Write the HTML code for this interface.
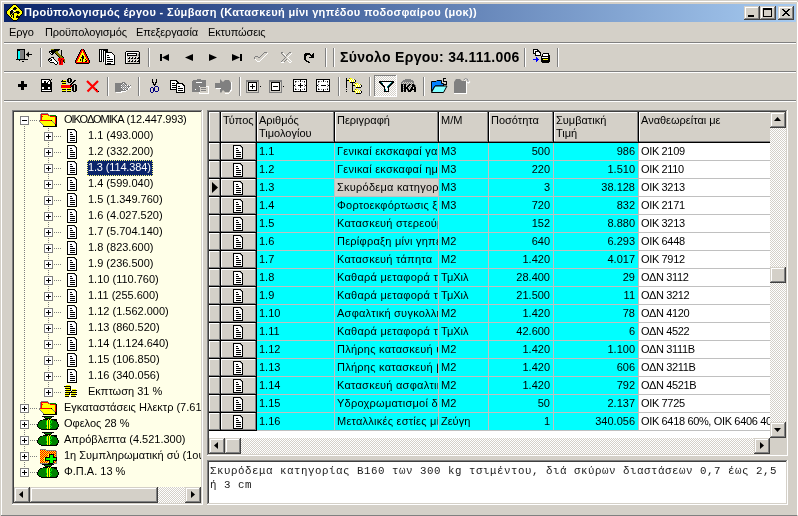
<!DOCTYPE html><html><head><meta charset="utf-8"><style>
*{margin:0;padding:0;box-sizing:border-box}
html,body{width:798px;height:516px;overflow:hidden}
body{position:relative;background:#D4D0C8;font-family:"Liberation Sans",sans-serif;font-size:11px;color:#000}
.a{position:absolute}
.t{white-space:pre;line-height:13px;will-change:transform}
.raised{box-shadow:inset -1px -1px #404040,inset 1px 1px #D4D0C8,inset -2px -2px #808080,inset 2px 2px #fff}
.sunken{box-shadow:inset -1px -1px #fff,inset 1px 1px #808080,inset -2px -2px #D4D0C8,inset 2px 2px #404040}
.thin{box-shadow:inset -1px -1px #808080,inset 1px 1px #fff}
.thinl{box-shadow:inset 0 -1px #808080,inset 1px 1px #fff}
.dither{background:repeating-conic-gradient(#fff 0 25%,#D4D0C8 0 50%) 0 0/2px 2px}
.cell{overflow:hidden;white-space:pre;line-height:13px;padding:2px 0 0 2px;will-change:transform}
.r{text-align:right;padding:2px 3px 0 0}
</style></head><body><div class="a " style="left:1px;top:1px;width:796px;height:1px;background:#fff"></div>
<div class="a " style="left:1px;top:1px;width:1px;height:514px;background:#fff"></div>
<div class="a " style="left:1px;top:515px;width:796px;height:1px;background:#808080"></div>
<div class="a " style="left:797px;top:2px;width:1px;height:513px;background:#fff"></div>
<div class="a " style="left:4px;top:4px;width:792px;height:18px;background:linear-gradient(to right,#0A246A,#A6CAF0)"></div>
<svg class="a" style="left:6px;top:4px;" width="17" height="17" viewBox="0 0 17 17" shape-rendering="crispEdges"><rect x="7" y="0" width="3" height="1" fill="#000000"/><rect x="6" y="1" width="1" height="1" fill="#000000"/><rect x="7" y="1" width="3" height="1" fill="#FFFF00"/><rect x="10" y="1" width="1" height="1" fill="#000000"/><rect x="5" y="2" width="1" height="1" fill="#000000"/><rect x="6" y="2" width="5" height="1" fill="#FFFF00"/><rect x="11" y="2" width="1" height="1" fill="#000000"/><rect x="4" y="3" width="1" height="1" fill="#000000"/><rect x="5" y="3" width="3" height="1" fill="#FFFF00"/><rect x="8" y="3" width="2" height="1" fill="#000000"/><rect x="10" y="3" width="2" height="1" fill="#FFFF00"/><rect x="12" y="3" width="1" height="1" fill="#000000"/><rect x="3" y="4" width="1" height="1" fill="#000000"/><rect x="4" y="4" width="3" height="1" fill="#FFFF00"/><rect x="7" y="4" width="4" height="1" fill="#000000"/><rect x="11" y="4" width="2" height="1" fill="#FFFF00"/><rect x="13" y="4" width="1" height="1" fill="#000000"/><rect x="2" y="5" width="1" height="1" fill="#000000"/><rect x="3" y="5" width="2" height="1" fill="#FFFF00"/><rect x="5" y="5" width="1" height="1" fill="#FFFFFF"/><rect x="6" y="5" width="1" height="1" fill="#FFFF00"/><rect x="7" y="5" width="3" height="1" fill="#000000"/><rect x="10" y="5" width="4" height="1" fill="#FFFF00"/><rect x="14" y="5" width="1" height="1" fill="#000000"/><rect x="1" y="6" width="1" height="1" fill="#000000"/><rect x="2" y="6" width="2" height="1" fill="#FFFF00"/><rect x="4" y="6" width="1" height="1" fill="#FFFFFF"/><rect x="5" y="6" width="2" height="1" fill="#000000"/><rect x="7" y="6" width="1" height="1" fill="#FFFFFF"/><rect x="8" y="6" width="7" height="1" fill="#FFFF00"/><rect x="15" y="6" width="1" height="1" fill="#000000"/><rect x="0" y="7" width="1" height="1" fill="#000000"/><rect x="1" y="7" width="3" height="1" fill="#FFFF00"/><rect x="4" y="7" width="3" height="1" fill="#000000"/><rect x="7" y="7" width="1" height="1" fill="#808080"/><rect x="8" y="7" width="1" height="1" fill="#FFFFFF"/><rect x="9" y="7" width="1" height="1" fill="#FFFF00"/><rect x="10" y="7" width="3" height="1" fill="#000000"/><rect x="13" y="7" width="3" height="1" fill="#FFFF00"/><rect x="16" y="7" width="1" height="1" fill="#000000"/><rect x="0" y="8" width="1" height="1" fill="#000000"/><rect x="1" y="8" width="3" height="1" fill="#FFFF00"/><rect x="4" y="8" width="3" height="1" fill="#000000"/><rect x="7" y="8" width="1" height="1" fill="#FFFF00"/><rect x="8" y="8" width="6" height="1" fill="#000000"/><rect x="14" y="8" width="2" height="1" fill="#FFFF00"/><rect x="16" y="8" width="1" height="1" fill="#000000"/><rect x="0" y="9" width="1" height="1" fill="#000000"/><rect x="1" y="9" width="3" height="1" fill="#FFFF00"/><rect x="4" y="9" width="2" height="1" fill="#000000"/><rect x="6" y="9" width="1" height="1" fill="#808080"/><rect x="7" y="9" width="1" height="1" fill="#000000"/><rect x="8" y="9" width="3" height="1" fill="#FFFF00"/><rect x="11" y="9" width="2" height="1" fill="#000000"/><rect x="13" y="9" width="3" height="1" fill="#FFFF00"/><rect x="16" y="9" width="1" height="1" fill="#000000"/><rect x="1" y="10" width="1" height="1" fill="#000000"/><rect x="2" y="10" width="2" height="1" fill="#FFFF00"/><rect x="4" y="10" width="1" height="1" fill="#000000"/><rect x="5" y="10" width="1" height="1" fill="#FFFF00"/><rect x="6" y="10" width="2" height="1" fill="#000000"/><rect x="8" y="10" width="7" height="1" fill="#FFFF00"/><rect x="15" y="10" width="1" height="1" fill="#000000"/><rect x="2" y="11" width="1" height="1" fill="#000000"/><rect x="3" y="11" width="2" height="1" fill="#FFFF00"/><rect x="5" y="11" width="1" height="1" fill="#000000"/><rect x="6" y="11" width="1" height="1" fill="#FFFF00"/><rect x="7" y="11" width="1" height="1" fill="#000000"/><rect x="8" y="11" width="3" height="1" fill="#FFFF00"/><rect x="11" y="11" width="1" height="1" fill="#000000"/><rect x="12" y="11" width="2" height="1" fill="#FFFF00"/><rect x="14" y="11" width="1" height="1" fill="#000000"/><rect x="3" y="12" width="1" height="1" fill="#000000"/><rect x="4" y="12" width="1" height="1" fill="#FFFF00"/><rect x="5" y="12" width="1" height="1" fill="#000000"/><rect x="6" y="12" width="1" height="1" fill="#FFFF00"/><rect x="7" y="12" width="1" height="1" fill="#000000"/><rect x="8" y="12" width="2" height="1" fill="#FFFF00"/><rect x="10" y="12" width="4" height="1" fill="#000000"/><rect x="4" y="13" width="1" height="1" fill="#000000"/><rect x="5" y="13" width="2" height="1" fill="#FFFF00"/><rect x="7" y="13" width="1" height="1" fill="#000000"/><rect x="8" y="13" width="2" height="1" fill="#FFFF00"/><rect x="10" y="13" width="4" height="1" fill="#000000"/><rect x="5" y="14" width="1" height="1" fill="#000000"/><rect x="6" y="14" width="6" height="1" fill="#FFFF00"/><rect x="12" y="14" width="1" height="1" fill="#000000"/><rect x="6" y="15" width="1" height="1" fill="#000000"/><rect x="7" y="15" width="4" height="1" fill="#FFFF00"/><rect x="11" y="15" width="1" height="1" fill="#000000"/><rect x="7" y="16" width="4" height="1" fill="#000000"/></svg>
<div class="a t" style="left:24px;top:6px;color:#fff;font-weight:bold;letter-spacing:0.34px">Προϋπολογισμός έργου - Σύμβαση (Κατασκευή μίνι γηπέδου ποδοσφαίρου (μοκ))</div>
<div class="a raised" style="left:744px;top:6px;width:16px;height:14px;background:#D4D0C8"><svg class="a" style="left:4px;top:9px;" width="6" height="2" viewBox="0 0 6 2" shape-rendering="crispEdges"><rect x="0" y="0" width="6" height="2" fill="#000"/></svg></div>
<div class="a raised" style="left:760px;top:6px;width:16px;height:14px;background:#D4D0C8"><svg class="a" style="left:3px;top:2px;" width="9" height="9" viewBox="0 0 9 9" shape-rendering="crispEdges"><rect x="0.5" y="1" width="8" height="7.5" fill="none" stroke="#000" stroke-width="1"/><rect x="0" y="0" width="9" height="2" fill="#000"/></svg></div>
<div class="a raised" style="left:778px;top:6px;width:16px;height:14px;background:#D4D0C8"><svg class="a" style="left:4px;top:3px;" width="8" height="7" viewBox="0 0 8 7" shape-rendering="crispEdges"><path d="M0 0h2l2 2.5l2-2.5h2l-3 3.5l3 3.5h-2l-2-2.5l-2 2.5h-2l3-3.5z" fill="#000"/></svg></div>
<div class="a t" style="left:9px;top:26px;letter-spacing:-0.12px">Εργο</div>
<div class="a t" style="left:45px;top:26px;letter-spacing:-0.12px">Προϋπολογισμός</div>
<div class="a t" style="left:136px;top:26px;letter-spacing:-0.12px">Επεξεργασία</div>
<div class="a t" style="left:208px;top:26px;letter-spacing:-0.12px">Εκτυπώσεις</div>
<div class="a " style="left:4px;top:42px;width:792px;height:1px;background:#808080"></div>
<div class="a " style="left:4px;top:43px;width:792px;height:1px;background:#fff"></div>
<div class="a " style="left:4px;top:71px;width:792px;height:1px;background:#808080"></div>
<div class="a " style="left:4px;top:72px;width:792px;height:1px;background:#fff"></div>
<div class="a " style="left:4px;top:100px;width:792px;height:1px;background:#808080"></div>
<div class="a " style="left:4px;top:101px;width:792px;height:1px;background:#fff"></div>
<div class="a " style="left:40px;top:48px;width:1px;height:19px;background:#808080"></div>
<div class="a " style="left:41px;top:48px;width:1px;height:19px;background:#fff"></div>
<div class="a " style="left:148px;top:48px;width:1px;height:19px;background:#808080"></div>
<div class="a " style="left:149px;top:48px;width:1px;height:19px;background:#fff"></div>
<div class="a " style="left:325px;top:48px;width:1px;height:19px;background:#808080"></div>
<div class="a " style="left:326px;top:48px;width:1px;height:19px;background:#fff"></div>
<div class="a " style="left:333px;top:48px;width:1px;height:19px;background:#808080"></div>
<div class="a " style="left:334px;top:48px;width:1px;height:19px;background:#fff"></div>
<div class="a " style="left:524px;top:48px;width:1px;height:19px;background:#808080"></div>
<div class="a " style="left:525px;top:48px;width:1px;height:19px;background:#fff"></div>
<div class="a " style="left:557px;top:48px;width:1px;height:19px;background:#808080"></div>
<div class="a " style="left:558px;top:48px;width:1px;height:19px;background:#fff"></div>
<div class="a t" style="left:340px;top:49px;font-weight:bold;font-size:14px;line-height:16px;letter-spacing:0.3px">Σύνολο Εργου: 34.111.006</div>
<div class="a " style="left:107px;top:77px;width:1px;height:19px;background:#808080"></div>
<div class="a " style="left:108px;top:77px;width:1px;height:19px;background:#fff"></div>
<div class="a " style="left:138px;top:77px;width:1px;height:19px;background:#808080"></div>
<div class="a " style="left:139px;top:77px;width:1px;height:19px;background:#fff"></div>
<div class="a " style="left:239px;top:77px;width:1px;height:19px;background:#808080"></div>
<div class="a " style="left:240px;top:77px;width:1px;height:19px;background:#fff"></div>
<div class="a " style="left:338px;top:77px;width:1px;height:19px;background:#808080"></div>
<div class="a " style="left:339px;top:77px;width:1px;height:19px;background:#fff"></div>
<div class="a " style="left:369px;top:77px;width:1px;height:19px;background:#808080"></div>
<div class="a " style="left:370px;top:77px;width:1px;height:19px;background:#fff"></div>
<div class="a " style="left:423px;top:77px;width:1px;height:19px;background:#808080"></div>
<div class="a " style="left:424px;top:77px;width:1px;height:19px;background:#fff"></div>
<svg class="a" style="left:16px;top:49px;" width="17" height="16" viewBox="0 0 17 16" shape-rendering="crispEdges"><rect x="1" y="0" width="8" height="10" fill="#000"/><rect x="4" y="1" width="4" height="9" fill="#808080"/><rect x="2" y="2" width="2" height="9" fill="#00FFFF"/><rect x="3" y="11" width="1" height="1" fill="#000"/>
<rect x="0" y="10" width="12" height="1" fill="#000"/><rect x="10" y="5" width="6" height="1" fill="#000"/><path d="M10 5.5 L13 2.5 L13 8.5 Z" fill="#000" shape-rendering="geometricPrecision"/><rect x="6" y="12" width="2" height="1" fill="#000"/></svg>
<svg class="a" style="left:47px;top:47px;" width="18" height="18" viewBox="0 0 18 18" shape-rendering="crispEdges"><rect x="4" y="2" width="3" height="1" fill="#808000"/><rect x="7" y="2" width="6" height="1" fill="#000000"/><rect x="4" y="3" width="8" height="1" fill="#000000"/><rect x="14" y="3" width="1" height="1" fill="#000000"/><rect x="2" y="4" width="7" height="1" fill="#000000"/><rect x="9" y="4" width="2" height="1" fill="#808000"/><rect x="14" y="4" width="1" height="1" fill="#000000"/><rect x="2" y="5" width="1" height="1" fill="#000000"/><rect x="3" y="5" width="1" height="1" fill="#FFFFFF"/><rect x="4" y="5" width="4" height="1" fill="#000000"/><rect x="8" y="5" width="3" height="1" fill="#808000"/><rect x="14" y="5" width="1" height="1" fill="#000000"/><rect x="3" y="6" width="1" height="1" fill="#000000"/><rect x="4" y="6" width="1" height="1" fill="#FFFFFF"/><rect x="5" y="6" width="2" height="1" fill="#000000"/><rect x="8" y="6" width="1" height="1" fill="#000000"/><rect x="9" y="6" width="3" height="1" fill="#808000"/><rect x="14" y="6" width="1" height="1" fill="#000000"/><rect x="4" y="7" width="2" height="1" fill="#000000"/><rect x="9" y="7" width="1" height="1" fill="#000000"/><rect x="10" y="7" width="3" height="1" fill="#808000"/><rect x="14" y="7" width="1" height="1" fill="#000000"/><rect x="10" y="8" width="1" height="1" fill="#000000"/><rect x="11" y="8" width="3" height="1" fill="#808000"/><rect x="14" y="8" width="1" height="1" fill="#000000"/><rect x="11" y="9" width="1" height="1" fill="#000000"/><rect x="12" y="9" width="3" height="1" fill="#808000"/><rect x="15" y="9" width="1" height="1" fill="#000000"/><rect x="4" y="10" width="3" height="1" fill="#000000"/><rect x="12" y="10" width="1" height="1" fill="#000000"/><rect x="13" y="10" width="3" height="1" fill="#808000"/><rect x="16" y="10" width="1" height="1" fill="#000000"/><rect x="2" y="11" width="2" height="1" fill="#000000"/><rect x="4" y="11" width="2" height="1" fill="#FFFFFF"/><rect x="6" y="11" width="1" height="1" fill="#000000"/><rect x="11" y="11" width="6" height="1" fill="#FF0000"/><rect x="1" y="12" width="2" height="1" fill="#000000"/><rect x="4" y="12" width="1" height="1" fill="#000000"/><rect x="5" y="12" width="2" height="1" fill="#FFFFFF"/><rect x="7" y="12" width="1" height="1" fill="#000000"/><rect x="11" y="12" width="3" height="1" fill="#FF0000"/><rect x="14" y="12" width="1" height="1" fill="#800000"/><rect x="15" y="12" width="2" height="1" fill="#FF0000"/><rect x="17" y="12" width="1" height="1" fill="#808000"/><rect x="1" y="13" width="1" height="1" fill="#000000"/><rect x="2" y="13" width="1" height="1" fill="#FFFFFF"/><rect x="3" y="13" width="2" height="1" fill="#000000"/><rect x="5" y="13" width="3" height="1" fill="#FFFFFF"/><rect x="8" y="13" width="1" height="1" fill="#000000"/><rect x="11" y="13" width="2" height="1" fill="#FF0000"/><rect x="13" y="13" width="1" height="1" fill="#800000"/><rect x="14" y="13" width="2" height="1" fill="#FF0000"/><rect x="16" y="13" width="1" height="1" fill="#000000"/><rect x="17" y="13" width="1" height="1" fill="#808000"/><rect x="2" y="14" width="1" height="1" fill="#000000"/><rect x="3" y="14" width="6" height="1" fill="#FFFFFF"/><rect x="9" y="14" width="1" height="1" fill="#000000"/><rect x="12" y="14" width="1" height="1" fill="#FF0000"/><rect x="13" y="14" width="1" height="1" fill="#800000"/><rect x="14" y="14" width="2" height="1" fill="#FF0000"/><rect x="16" y="14" width="1" height="1" fill="#000000"/><rect x="17" y="14" width="1" height="1" fill="#808000"/><rect x="3" y="15" width="4" height="1" fill="#000000"/><rect x="7" y="15" width="3" height="1" fill="#FFFFFF"/><rect x="10" y="15" width="1" height="1" fill="#000000"/><rect x="12" y="15" width="1" height="1" fill="#FF0000"/><rect x="13" y="15" width="1" height="1" fill="#800000"/><rect x="14" y="15" width="2" height="1" fill="#FF0000"/><rect x="17" y="15" width="1" height="1" fill="#000000"/><rect x="7" y="16" width="1" height="1" fill="#000000"/><rect x="8" y="16" width="2" height="1" fill="#FFFFFF"/><rect x="10" y="16" width="1" height="1" fill="#000000"/><rect x="12" y="16" width="1" height="1" fill="#FF0000"/><rect x="13" y="16" width="1" height="1" fill="#800000"/><rect x="14" y="16" width="2" height="1" fill="#FF0000"/><rect x="8" y="17" width="2" height="1" fill="#000000"/><rect x="12" y="17" width="4" height="1" fill="#FF0000"/></svg>
<svg class="a" style="left:72px;top:47px;" width="18" height="17" viewBox="0 0 18 17" shape-rendering="crispEdges"><rect x="9" y="2" width="1" height="1" fill="#000000"/><rect x="10" y="2" width="1" height="1" fill="#FF0000"/><rect x="11" y="2" width="1" height="1" fill="#000000"/><rect x="8" y="3" width="1" height="1" fill="#000000"/><rect x="9" y="3" width="3" height="1" fill="#FF0000"/><rect x="12" y="3" width="1" height="1" fill="#000000"/><rect x="8" y="4" width="1" height="1" fill="#000000"/><rect x="9" y="4" width="1" height="1" fill="#FF0000"/><rect x="10" y="4" width="1" height="1" fill="#FFFF00"/><rect x="11" y="4" width="1" height="1" fill="#FF0000"/><rect x="12" y="4" width="1" height="1" fill="#000000"/><rect x="7" y="5" width="1" height="1" fill="#000000"/><rect x="8" y="5" width="2" height="1" fill="#FF0000"/><rect x="10" y="5" width="1" height="1" fill="#FFFF00"/><rect x="11" y="5" width="2" height="1" fill="#FF0000"/><rect x="13" y="5" width="1" height="1" fill="#000000"/><rect x="7" y="6" width="1" height="1" fill="#000000"/><rect x="8" y="6" width="1" height="1" fill="#FF0000"/><rect x="9" y="6" width="3" height="1" fill="#FFFF00"/><rect x="12" y="6" width="1" height="1" fill="#FF0000"/><rect x="13" y="6" width="1" height="1" fill="#000000"/><rect x="6" y="7" width="1" height="1" fill="#000000"/><rect x="7" y="7" width="2" height="1" fill="#FF0000"/><rect x="9" y="7" width="3" height="1" fill="#FFFF00"/><rect x="12" y="7" width="2" height="1" fill="#FF0000"/><rect x="14" y="7" width="1" height="1" fill="#000000"/><rect x="6" y="8" width="1" height="1" fill="#000000"/><rect x="7" y="8" width="1" height="1" fill="#FF0000"/><rect x="8" y="8" width="2" height="1" fill="#FFFF00"/><rect x="10" y="8" width="1" height="1" fill="#000000"/><rect x="11" y="8" width="2" height="1" fill="#FFFF00"/><rect x="13" y="8" width="1" height="1" fill="#FF0000"/><rect x="14" y="8" width="1" height="1" fill="#000000"/><rect x="5" y="9" width="1" height="1" fill="#000000"/><rect x="6" y="9" width="2" height="1" fill="#FF0000"/><rect x="8" y="9" width="2" height="1" fill="#FFFF00"/><rect x="10" y="9" width="2" height="1" fill="#000000"/><rect x="12" y="9" width="1" height="1" fill="#FFFF00"/><rect x="13" y="9" width="2" height="1" fill="#FF0000"/><rect x="15" y="9" width="1" height="1" fill="#000000"/><rect x="5" y="10" width="1" height="1" fill="#000000"/><rect x="6" y="10" width="1" height="1" fill="#FF0000"/><rect x="7" y="10" width="2" height="1" fill="#FFFF00"/><rect x="9" y="10" width="3" height="1" fill="#000000"/><rect x="12" y="10" width="2" height="1" fill="#FFFF00"/><rect x="14" y="10" width="1" height="1" fill="#FF0000"/><rect x="15" y="10" width="1" height="1" fill="#000000"/><rect x="4" y="11" width="1" height="1" fill="#000000"/><rect x="5" y="11" width="2" height="1" fill="#FF0000"/><rect x="7" y="11" width="3" height="1" fill="#FFFF00"/><rect x="10" y="11" width="2" height="1" fill="#000000"/><rect x="12" y="11" width="2" height="1" fill="#FFFF00"/><rect x="14" y="11" width="2" height="1" fill="#FF0000"/><rect x="16" y="11" width="1" height="1" fill="#000000"/><rect x="4" y="12" width="1" height="1" fill="#000000"/><rect x="5" y="12" width="1" height="1" fill="#FF0000"/><rect x="6" y="12" width="2" height="1" fill="#FFFF00"/><rect x="8" y="12" width="1" height="1" fill="#000000"/><rect x="9" y="12" width="1" height="1" fill="#FFFF00"/><rect x="10" y="12" width="1" height="1" fill="#000000"/><rect x="11" y="12" width="2" height="1" fill="#FFFF00"/><rect x="13" y="12" width="1" height="1" fill="#000000"/><rect x="14" y="12" width="1" height="1" fill="#FFFF00"/><rect x="15" y="12" width="1" height="1" fill="#FF0000"/><rect x="16" y="12" width="1" height="1" fill="#000000"/><rect x="3" y="13" width="1" height="1" fill="#000000"/><rect x="4" y="13" width="2" height="1" fill="#FF0000"/><rect x="6" y="13" width="2" height="1" fill="#FFFF00"/><rect x="8" y="13" width="1" height="1" fill="#000000"/><rect x="9" y="13" width="1" height="1" fill="#FFFF00"/><rect x="10" y="13" width="1" height="1" fill="#000000"/><rect x="11" y="13" width="3" height="1" fill="#FFFF00"/><rect x="14" y="13" width="1" height="1" fill="#000000"/><rect x="15" y="13" width="2" height="1" fill="#FF0000"/><rect x="17" y="13" width="1" height="1" fill="#000000"/><rect x="3" y="14" width="1" height="1" fill="#000000"/><rect x="4" y="14" width="1" height="1" fill="#FF0000"/><rect x="5" y="14" width="5" height="1" fill="#FFFF00"/><rect x="10" y="14" width="1" height="1" fill="#000000"/><rect x="11" y="14" width="2" height="1" fill="#FFFF00"/><rect x="13" y="14" width="2" height="1" fill="#000000"/><rect x="15" y="14" width="1" height="1" fill="#FFFF00"/><rect x="16" y="14" width="1" height="1" fill="#FF0000"/><rect x="17" y="14" width="1" height="1" fill="#000000"/><rect x="3" y="15" width="1" height="1" fill="#000000"/><rect x="4" y="15" width="13" height="1" fill="#FF0000"/><rect x="17" y="15" width="1" height="1" fill="#000000"/><rect x="4" y="16" width="13" height="1" fill="#000000"/></svg>
<svg class="a" style="left:99px;top:49px;" width="17" height="16" viewBox="0 0 17 16" shape-rendering="crispEdges"><rect x="0" y="0" width="9" height="13" fill="#000"/><rect x="1" y="1" width="1" height="11" fill="#fff"/><rect x="3" y="1" width="1" height="12" fill="#fff"/><rect x="5" y="2" width="1" height="12" fill="#fff"/>
<path d="M6.5 3.5 H12.5 L15.5 6.5 V15.5 H6.5 Z" fill="#fff" stroke="#000"/><rect x="8" y="6" width="2" height="1" fill="#000"/><rect x="8" y="8" width="3" height="1" fill="#000"/><rect x="8" y="10" width="6" height="1" fill="#000"/><rect x="8" y="12" width="6" height="1" fill="#000"/><rect x="8" y="14" width="4" height="1" fill="#000"/></svg>
<svg class="a" style="left:122px;top:47px;" width="19" height="17" viewBox="0 0 19 17" shape-rendering="crispEdges"><rect x="4" y="4" width="13" height="1" fill="#000000"/><rect x="3" y="5" width="1" height="1" fill="#000000"/><rect x="4" y="5" width="12" height="1" fill="#FFFFFF"/><rect x="16" y="5" width="1" height="1" fill="#D4D0C8"/><rect x="17" y="5" width="1" height="1" fill="#000000"/><rect x="3" y="6" width="1" height="1" fill="#000000"/><rect x="4" y="6" width="1" height="1" fill="#FFFFFF"/><rect x="5" y="6" width="10" height="1" fill="#000000"/><rect x="15" y="6" width="2" height="1" fill="#D4D0C8"/><rect x="17" y="6" width="1" height="1" fill="#000000"/><rect x="3" y="7" width="1" height="1" fill="#000000"/><rect x="4" y="7" width="1" height="1" fill="#FFFFFF"/><rect x="5" y="7" width="1" height="1" fill="#000000"/><rect x="6" y="7" width="8" height="1" fill="#FFFFFF"/><rect x="14" y="7" width="1" height="1" fill="#000000"/><rect x="15" y="7" width="1" height="1" fill="#D4D0C8"/><rect x="16" y="7" width="1" height="1" fill="#808080"/><rect x="17" y="7" width="1" height="1" fill="#000000"/><rect x="3" y="8" width="1" height="1" fill="#000000"/><rect x="4" y="8" width="1" height="1" fill="#FFFFFF"/><rect x="5" y="8" width="10" height="1" fill="#000000"/><rect x="15" y="8" width="1" height="1" fill="#D4D0C8"/><rect x="16" y="8" width="1" height="1" fill="#808080"/><rect x="17" y="8" width="1" height="1" fill="#000000"/><rect x="3" y="9" width="1" height="1" fill="#000000"/><rect x="4" y="9" width="1" height="1" fill="#FFFFFF"/><rect x="5" y="9" width="12" height="1" fill="#D4D0C8"/><rect x="17" y="9" width="1" height="1" fill="#000000"/><rect x="3" y="10" width="1" height="1" fill="#000000"/><rect x="4" y="10" width="1" height="1" fill="#FFFFFF"/><rect x="5" y="10" width="1" height="1" fill="#D4D0C8"/><rect x="6" y="10" width="1" height="1" fill="#FFFFFF"/><rect x="7" y="10" width="1" height="1" fill="#000000"/><rect x="8" y="10" width="1" height="1" fill="#D4D0C8"/><rect x="9" y="10" width="1" height="1" fill="#FFFFFF"/><rect x="10" y="10" width="1" height="1" fill="#000000"/><rect x="11" y="10" width="1" height="1" fill="#D4D0C8"/><rect x="12" y="10" width="1" height="1" fill="#FFFFFF"/><rect x="13" y="10" width="1" height="1" fill="#000000"/><rect x="14" y="10" width="1" height="1" fill="#D4D0C8"/><rect x="15" y="10" width="1" height="1" fill="#FFFFFF"/><rect x="16" y="10" width="2" height="1" fill="#000000"/><rect x="3" y="11" width="1" height="1" fill="#000000"/><rect x="4" y="11" width="1" height="1" fill="#FFFFFF"/><rect x="5" y="11" width="1" height="1" fill="#D4D0C8"/><rect x="6" y="11" width="2" height="1" fill="#000000"/><rect x="8" y="11" width="1" height="1" fill="#D4D0C8"/><rect x="9" y="11" width="2" height="1" fill="#000000"/><rect x="11" y="11" width="1" height="1" fill="#D4D0C8"/><rect x="12" y="11" width="2" height="1" fill="#000000"/><rect x="14" y="11" width="1" height="1" fill="#D4D0C8"/><rect x="15" y="11" width="3" height="1" fill="#000000"/><rect x="3" y="12" width="1" height="1" fill="#000000"/><rect x="4" y="12" width="1" height="1" fill="#FFFFFF"/><rect x="5" y="12" width="12" height="1" fill="#D4D0C8"/><rect x="17" y="12" width="1" height="1" fill="#000000"/><rect x="3" y="13" width="1" height="1" fill="#000000"/><rect x="4" y="13" width="1" height="1" fill="#FFFFFF"/><rect x="5" y="13" width="1" height="1" fill="#D4D0C8"/><rect x="6" y="13" width="1" height="1" fill="#FFFFFF"/><rect x="7" y="13" width="1" height="1" fill="#000000"/><rect x="8" y="13" width="1" height="1" fill="#D4D0C8"/><rect x="9" y="13" width="1" height="1" fill="#FFFFFF"/><rect x="10" y="13" width="1" height="1" fill="#000000"/><rect x="11" y="13" width="1" height="1" fill="#D4D0C8"/><rect x="12" y="13" width="1" height="1" fill="#FFFFFF"/><rect x="13" y="13" width="1" height="1" fill="#000000"/><rect x="14" y="13" width="1" height="1" fill="#D4D0C8"/><rect x="15" y="13" width="1" height="1" fill="#FFFFFF"/><rect x="16" y="13" width="2" height="1" fill="#000000"/><rect x="3" y="14" width="1" height="1" fill="#000000"/><rect x="4" y="14" width="1" height="1" fill="#FFFFFF"/><rect x="5" y="14" width="1" height="1" fill="#D4D0C8"/><rect x="6" y="14" width="2" height="1" fill="#000000"/><rect x="8" y="14" width="1" height="1" fill="#D4D0C8"/><rect x="9" y="14" width="2" height="1" fill="#000000"/><rect x="11" y="14" width="1" height="1" fill="#D4D0C8"/><rect x="12" y="14" width="2" height="1" fill="#000000"/><rect x="14" y="14" width="1" height="1" fill="#D4D0C8"/><rect x="15" y="14" width="3" height="1" fill="#000000"/><rect x="3" y="15" width="1" height="1" fill="#000000"/><rect x="4" y="15" width="1" height="1" fill="#FFFFFF"/><rect x="5" y="15" width="12" height="1" fill="#D4D0C8"/><rect x="17" y="15" width="1" height="1" fill="#000000"/><rect x="3" y="16" width="15" height="1" fill="#000000"/></svg>
<svg class="a" style="left:160px;top:54px;" width="11" height="7" viewBox="0 0 11 7" shape-rendering="crispEdges"><rect x="0" y="0" width="2" height="7" fill="#000"/><path d="M2 3.5 L9 0 L9 7 Z" fill="#000" shape-rendering="geometricPrecision"/></svg>
<svg class="a" style="left:185px;top:54px;" width="8" height="7" viewBox="0 0 8 7" shape-rendering="crispEdges"><path d="M0 3.5 L8 0 L8 7 Z" fill="#000" shape-rendering="geometricPrecision"/></svg>
<svg class="a" style="left:209px;top:54px;" width="8" height="7" viewBox="0 0 8 7" shape-rendering="crispEdges"><path d="M0 0 L8 3.5 L0 7 Z" fill="#000" shape-rendering="geometricPrecision"/></svg>
<svg class="a" style="left:232px;top:54px;" width="11" height="7" viewBox="0 0 11 7" shape-rendering="crispEdges"><path d="M0 0 L8 3.5 L0 7 Z" fill="#000" shape-rendering="geometricPrecision"/><rect x="8" y="0" width="2" height="7" fill="#000"/></svg>
<svg class="a" style="left:252px;top:50px;" width="16" height="12" viewBox="0 0 16 12" shape-rendering="crispEdges"><rect x="12" y="2" width="3" height="1" fill="#808080"/><rect x="11" y="3" width="1" height="1" fill="#808080"/><rect x="15" y="3" width="1" height="1" fill="#FFFFFF"/><rect x="10" y="4" width="1" height="1" fill="#808080"/><rect x="14" y="4" width="1" height="1" fill="#FFFFFF"/><rect x="9" y="5" width="1" height="1" fill="#808080"/><rect x="13" y="5" width="1" height="1" fill="#FFFFFF"/><rect x="3" y="6" width="3" height="1" fill="#808080"/><rect x="8" y="6" width="1" height="1" fill="#808080"/><rect x="12" y="6" width="1" height="1" fill="#FFFFFF"/><rect x="2" y="7" width="1" height="1" fill="#808080"/><rect x="6" y="7" width="2" height="1" fill="#808080"/><rect x="11" y="7" width="1" height="1" fill="#FFFFFF"/><rect x="2" y="8" width="1" height="1" fill="#808080"/><rect x="10" y="8" width="1" height="1" fill="#FFFFFF"/><rect x="3" y="9" width="1" height="1" fill="#FFFFFF"/><rect x="9" y="9" width="1" height="1" fill="#FFFFFF"/><rect x="4" y="10" width="1" height="1" fill="#FFFFFF"/><rect x="8" y="10" width="1" height="1" fill="#FFFFFF"/><rect x="5" y="11" width="3" height="1" fill="#FFFFFF"/></svg>
<svg class="a" style="left:280px;top:52px;" width="12" height="11" viewBox="0 0 12 11" shape-rendering="crispEdges"><rect x="1" y="0" width="2" height="1" fill="#808080"/><rect x="9" y="0" width="2" height="1" fill="#808080"/><rect x="1" y="1" width="1" height="1" fill="#808080"/><rect x="3" y="1" width="1" height="1" fill="#FFFFFF"/><rect x="8" y="1" width="1" height="1" fill="#808080"/><rect x="11" y="1" width="1" height="1" fill="#FFFFFF"/><rect x="2" y="2" width="1" height="1" fill="#808080"/><rect x="4" y="2" width="1" height="1" fill="#FFFFFF"/><rect x="7" y="2" width="1" height="1" fill="#808080"/><rect x="10" y="2" width="1" height="1" fill="#FFFFFF"/><rect x="3" y="3" width="1" height="1" fill="#808080"/><rect x="5" y="3" width="1" height="1" fill="#FFFFFF"/><rect x="6" y="3" width="1" height="1" fill="#808080"/><rect x="9" y="3" width="1" height="1" fill="#FFFFFF"/><rect x="4" y="4" width="1" height="1" fill="#808080"/><rect x="8" y="4" width="1" height="1" fill="#FFFFFF"/><rect x="5" y="5" width="1" height="1" fill="#808080"/><rect x="7" y="5" width="1" height="1" fill="#FFFFFF"/><rect x="4" y="6" width="1" height="1" fill="#808080"/><rect x="8" y="6" width="1" height="1" fill="#FFFFFF"/><rect x="3" y="7" width="1" height="1" fill="#808080"/><rect x="6" y="7" width="1" height="1" fill="#808080"/><rect x="9" y="7" width="1" height="1" fill="#FFFFFF"/><rect x="2" y="8" width="1" height="1" fill="#808080"/><rect x="5" y="8" width="1" height="1" fill="#808080"/><rect x="7" y="8" width="1" height="1" fill="#FFFFFF"/><rect x="10" y="8" width="1" height="1" fill="#FFFFFF"/><rect x="1" y="9" width="1" height="1" fill="#808080"/><rect x="4" y="9" width="1" height="1" fill="#808080"/><rect x="8" y="9" width="1" height="1" fill="#FFFFFF"/><rect x="11" y="9" width="1" height="1" fill="#FFFFFF"/><rect x="1" y="10" width="3" height="1" fill="#FFFFFF"/><rect x="9" y="10" width="2" height="1" fill="#FFFFFF"/></svg>
<svg class="a" style="left:303px;top:53px;" width="12" height="10" viewBox="0 0 12 10" shape-rendering="crispEdges"><rect x="2" y="0" width="5" height="1" fill="#000000"/><rect x="10" y="0" width="1" height="1" fill="#000000"/><rect x="1" y="1" width="7" height="1" fill="#000000"/><rect x="9" y="1" width="2" height="1" fill="#000000"/><rect x="1" y="2" width="3" height="1" fill="#000000"/><rect x="7" y="2" width="4" height="1" fill="#000000"/><rect x="1" y="3" width="2" height="1" fill="#000000"/><rect x="8" y="3" width="3" height="1" fill="#000000"/><rect x="1" y="4" width="2" height="1" fill="#000000"/><rect x="6" y="4" width="5" height="1" fill="#000000"/><rect x="1" y="5" width="2" height="1" fill="#000000"/><rect x="1" y="6" width="2" height="1" fill="#000000"/><rect x="2" y="7" width="2" height="1" fill="#000000"/><rect x="3" y="8" width="3" height="1" fill="#000000"/><rect x="5" y="9" width="2" height="1" fill="#000000"/></svg>
<svg class="a" style="left:533px;top:49px;" width="17" height="14" viewBox="0 0 17 14" shape-rendering="crispEdges"><rect x="0" y="0" width="5" height="1" fill="#000000"/><rect x="0" y="1" width="1" height="1" fill="#000000"/><rect x="1" y="1" width="3" height="1" fill="#FFFFFF"/><rect x="4" y="1" width="2" height="1" fill="#000000"/><rect x="0" y="2" width="1" height="1" fill="#000000"/><rect x="1" y="2" width="1" height="1" fill="#FFFFFF"/><rect x="2" y="2" width="5" height="1" fill="#000000"/><rect x="0" y="3" width="1" height="1" fill="#000000"/><rect x="1" y="3" width="1" height="1" fill="#FFFFFF"/><rect x="2" y="3" width="1" height="1" fill="#000000"/><rect x="3" y="3" width="3" height="1" fill="#FFFFFF"/><rect x="6" y="3" width="2" height="1" fill="#000000"/><rect x="0" y="4" width="3" height="1" fill="#000000"/><rect x="3" y="4" width="4" height="1" fill="#FFFFFF"/><rect x="7" y="4" width="1" height="1" fill="#000000"/><rect x="10" y="4" width="6" height="1" fill="#000000"/><rect x="2" y="5" width="1" height="1" fill="#000000"/><rect x="3" y="5" width="4" height="1" fill="#FFFFFF"/><rect x="7" y="5" width="1" height="1" fill="#000000"/><rect x="9" y="5" width="1" height="1" fill="#000000"/><rect x="10" y="5" width="5" height="1" fill="#FFFFFF"/><rect x="15" y="5" width="1" height="1" fill="#000000"/><rect x="2" y="6" width="6" height="1" fill="#000000"/><rect x="9" y="6" width="1" height="1" fill="#000000"/><rect x="10" y="6" width="5" height="1" fill="#FFFFFF"/><rect x="15" y="6" width="2" height="1" fill="#000000"/><rect x="8" y="7" width="9" height="1" fill="#000000"/><rect x="3" y="8" width="1" height="1" fill="#0000FF"/><rect x="8" y="8" width="1" height="1" fill="#000000"/><rect x="9" y="8" width="6" height="1" fill="#FFFFFF"/><rect x="15" y="8" width="2" height="1" fill="#000000"/><rect x="3" y="9" width="2" height="1" fill="#0000FF"/><rect x="8" y="9" width="9" height="1" fill="#000000"/><rect x="0" y="10" width="6" height="1" fill="#0000FF"/><rect x="8" y="10" width="2" height="1" fill="#000000"/><rect x="10" y="10" width="5" height="1" fill="#FFFF00"/><rect x="15" y="10" width="2" height="1" fill="#000000"/><rect x="3" y="11" width="2" height="1" fill="#0000FF"/><rect x="8" y="11" width="9" height="1" fill="#000000"/><rect x="3" y="12" width="1" height="1" fill="#0000FF"/><rect x="8" y="12" width="9" height="1" fill="#000000"/><rect x="9" y="13" width="7" height="1" fill="#000000"/></svg>
<svg class="a" style="left:18px;top:81px;" width="9" height="9" viewBox="0 0 9 9" shape-rendering="crispEdges"><rect x="0" y="3" width="9" height="3" fill="#000"/><rect x="3" y="0" width="3" height="9" fill="#000"/></svg>
<svg class="a" style="left:41px;top:79px;" width="11" height="13" viewBox="0 0 11 13" shape-rendering="crispEdges"><rect x="0" y="0" width="9" height="1" fill="#000000"/><rect x="10" y="0" width="1" height="1" fill="#000000"/><rect x="0" y="1" width="1" height="1" fill="#000000"/><rect x="1" y="1" width="7" height="1" fill="#FFFFFF"/><rect x="8" y="1" width="2" height="1" fill="#000000"/><rect x="0" y="2" width="1" height="1" fill="#000000"/><rect x="1" y="2" width="2" height="1" fill="#FFFFFF"/><rect x="3" y="2" width="2" height="1" fill="#000000"/><rect x="5" y="2" width="2" height="1" fill="#FFFFFF"/><rect x="7" y="2" width="1" height="1" fill="#000000"/><rect x="8" y="2" width="1" height="1" fill="#FFFFFF"/><rect x="9" y="2" width="1" height="1" fill="#000000"/><rect x="0" y="3" width="1" height="1" fill="#000000"/><rect x="1" y="3" width="2" height="1" fill="#FFFFFF"/><rect x="3" y="3" width="2" height="1" fill="#000000"/><rect x="5" y="3" width="1" height="1" fill="#FFFFFF"/><rect x="6" y="3" width="1" height="1" fill="#000000"/><rect x="7" y="3" width="2" height="1" fill="#FFFFFF"/><rect x="9" y="3" width="2" height="1" fill="#000000"/><rect x="0" y="4" width="7" height="1" fill="#000000"/><rect x="7" y="4" width="2" height="1" fill="#FFFFFF"/><rect x="9" y="4" width="2" height="1" fill="#000000"/><rect x="0" y="5" width="11" height="1" fill="#000000"/><rect x="0" y="6" width="11" height="1" fill="#000000"/><rect x="0" y="7" width="11" height="1" fill="#000000"/><rect x="0" y="8" width="1" height="1" fill="#000000"/><rect x="1" y="8" width="2" height="1" fill="#FFFFFF"/><rect x="3" y="8" width="4" height="1" fill="#000000"/><rect x="7" y="8" width="2" height="1" fill="#FFFFFF"/><rect x="9" y="8" width="2" height="1" fill="#000000"/><rect x="0" y="9" width="1" height="1" fill="#000000"/><rect x="1" y="9" width="2" height="1" fill="#FFFFFF"/><rect x="3" y="9" width="4" height="1" fill="#000000"/><rect x="7" y="9" width="2" height="1" fill="#FFFFFF"/><rect x="9" y="9" width="2" height="1" fill="#000000"/><rect x="0" y="10" width="11" height="1" fill="#000000"/><rect x="0" y="11" width="1" height="1" fill="#000000"/><rect x="1" y="11" width="9" height="1" fill="#FFFFFF"/><rect x="10" y="11" width="1" height="1" fill="#000000"/><rect x="0" y="12" width="11" height="1" fill="#000000"/></svg>
<svg class="a" style="left:61px;top:78px;" width="16" height="14" viewBox="0 0 16 14" shape-rendering="crispEdges"><rect x="7" y="0" width="3" height="1" fill="#000000"/><rect x="6" y="1" width="2" height="1" fill="#000000"/><rect x="9" y="1" width="2" height="1" fill="#000000"/><rect x="1" y="2" width="1" height="1" fill="#000000"/><rect x="2" y="2" width="3" height="1" fill="#FFFF00"/><rect x="6" y="2" width="2" height="1" fill="#000000"/><rect x="9" y="2" width="2" height="1" fill="#000000"/><rect x="13" y="2" width="2" height="1" fill="#000000"/><rect x="0" y="3" width="5" height="1" fill="#000000"/><rect x="6" y="3" width="2" height="1" fill="#000000"/><rect x="9" y="3" width="2" height="1" fill="#000000"/><rect x="12" y="3" width="2" height="1" fill="#000000"/><rect x="1" y="4" width="4" height="1" fill="#FFFF00"/><rect x="7" y="4" width="3" height="1" fill="#000000"/><rect x="11" y="4" width="2" height="1" fill="#000000"/><rect x="1" y="5" width="4" height="1" fill="#000000"/><rect x="10" y="5" width="2" height="1" fill="#000000"/><rect x="1" y="6" width="4" height="1" fill="#FFFF00"/><rect x="9" y="6" width="2" height="1" fill="#000000"/><rect x="12" y="6" width="3" height="1" fill="#000000"/><rect x="0" y="7" width="9" height="1" fill="#FF0000"/><rect x="9" y="7" width="1" height="1" fill="#000000"/><rect x="10" y="7" width="1" height="1" fill="#FF0000"/><rect x="11" y="7" width="2" height="1" fill="#000000"/><rect x="14" y="7" width="2" height="1" fill="#000000"/><rect x="0" y="8" width="10" height="1" fill="#FF0000"/><rect x="10" y="8" width="3" height="1" fill="#000000"/><rect x="14" y="8" width="2" height="1" fill="#000000"/><rect x="0" y="9" width="9" height="1" fill="#FF0000"/><rect x="9" y="9" width="1" height="1" fill="#000000"/><rect x="11" y="9" width="2" height="1" fill="#000000"/><rect x="14" y="9" width="2" height="1" fill="#000000"/><rect x="1" y="10" width="4" height="1" fill="#FFFF00"/><rect x="6" y="10" width="4" height="1" fill="#FFFF00"/><rect x="11" y="10" width="2" height="1" fill="#000000"/><rect x="14" y="10" width="2" height="1" fill="#000000"/><rect x="1" y="11" width="4" height="1" fill="#000000"/><rect x="6" y="11" width="4" height="1" fill="#000000"/><rect x="11" y="11" width="2" height="1" fill="#000000"/><rect x="14" y="11" width="2" height="1" fill="#000000"/><rect x="1" y="12" width="4" height="1" fill="#FFFF00"/><rect x="6" y="12" width="4" height="1" fill="#FFFF00"/><rect x="11" y="12" width="2" height="1" fill="#000000"/><rect x="14" y="12" width="2" height="1" fill="#000000"/><rect x="1" y="13" width="4" height="1" fill="#000000"/><rect x="6" y="13" width="4" height="1" fill="#000000"/><rect x="12" y="13" width="3" height="1" fill="#000000"/></svg>
<svg class="a" style="left:86px;top:80px;" width="14" height="13" viewBox="0 0 14 13" shape-rendering="crispEdges"><path d="M1 1 L12 12 M12 1 L1.5 11.5" stroke="#FF0000" stroke-width="2.2" shape-rendering="geometricPrecision"/><rect x="12" y="11" width="1" height="1" fill="#000"/><rect x="10" y="9" width="1" height="1" fill="#000"/></svg>
<svg class="a" style="left:115px;top:82px;" width="17" height="11" viewBox="0 0 17 11" shape-rendering="crispEdges"><rect x="7" y="0" width="3" height="1" fill="#808080"/><rect x="0" y="1" width="8" height="1" fill="#808080"/><rect x="8" y="1" width="1" height="1" fill="#FFFFFF"/><rect x="9" y="1" width="2" height="1" fill="#808080"/><rect x="0" y="2" width="7" height="1" fill="#808080"/><rect x="7" y="2" width="1" height="1" fill="#C0C0C0"/><rect x="8" y="2" width="1" height="1" fill="#808080"/><rect x="9" y="2" width="1" height="1" fill="#C0C0C0"/><rect x="10" y="2" width="2" height="1" fill="#808080"/><rect x="0" y="3" width="6" height="1" fill="#808080"/><rect x="6" y="3" width="1" height="1" fill="#FFFFFF"/><rect x="7" y="3" width="1" height="1" fill="#808080"/><rect x="8" y="3" width="1" height="1" fill="#C0C0C0"/><rect x="9" y="3" width="1" height="1" fill="#808080"/><rect x="10" y="3" width="1" height="1" fill="#FFFFFF"/><rect x="11" y="3" width="1" height="1" fill="#808080"/><rect x="12" y="3" width="1" height="1" fill="#FFFFFF"/><rect x="13" y="3" width="1" height="1" fill="#808080"/><rect x="14" y="3" width="1" height="1" fill="#FFFFFF"/><rect x="15" y="3" width="1" height="1" fill="#808080"/><rect x="0" y="4" width="7" height="1" fill="#808080"/><rect x="7" y="4" width="1" height="1" fill="#C0C0C0"/><rect x="8" y="4" width="1" height="1" fill="#808080"/><rect x="9" y="4" width="1" height="1" fill="#C0C0C0"/><rect x="10" y="4" width="1" height="1" fill="#808080"/><rect x="11" y="4" width="1" height="1" fill="#C0C0C0"/><rect x="12" y="4" width="3" height="1" fill="#808080"/><rect x="15" y="4" width="1" height="1" fill="#FFFFFF"/><rect x="0" y="5" width="6" height="1" fill="#808080"/><rect x="6" y="5" width="1" height="1" fill="#FFFFFF"/><rect x="7" y="5" width="1" height="1" fill="#808080"/><rect x="8" y="5" width="1" height="1" fill="#FFFFFF"/><rect x="9" y="5" width="1" height="1" fill="#808080"/><rect x="10" y="5" width="1" height="1" fill="#FFFFFF"/><rect x="11" y="5" width="1" height="1" fill="#808080"/><rect x="12" y="5" width="1" height="1" fill="#FFFFFF"/><rect x="13" y="5" width="1" height="1" fill="#808080"/><rect x="14" y="5" width="2" height="1" fill="#FFFFFF"/><rect x="0" y="6" width="7" height="1" fill="#808080"/><rect x="7" y="6" width="1" height="1" fill="#C0C0C0"/><rect x="8" y="6" width="1" height="1" fill="#808080"/><rect x="9" y="6" width="1" height="1" fill="#C0C0C0"/><rect x="10" y="6" width="1" height="1" fill="#808080"/><rect x="11" y="6" width="1" height="1" fill="#C0C0C0"/><rect x="12" y="6" width="1" height="1" fill="#808080"/><rect x="13" y="6" width="1" height="1" fill="#FFFFFF"/><rect x="0" y="7" width="8" height="1" fill="#808080"/><rect x="8" y="7" width="1" height="1" fill="#FFFFFF"/><rect x="9" y="7" width="1" height="1" fill="#808080"/><rect x="10" y="7" width="1" height="1" fill="#FFFFFF"/><rect x="11" y="7" width="2" height="1" fill="#808080"/><rect x="13" y="7" width="1" height="1" fill="#FFFFFF"/><rect x="0" y="8" width="11" height="1" fill="#808080"/><rect x="11" y="8" width="1" height="1" fill="#FFFFFF"/><rect x="0" y="9" width="6" height="1" fill="#808080"/><rect x="6" y="9" width="5" height="1" fill="#FFFFFF"/><rect x="1" y="10" width="6" height="1" fill="#FFFFFF"/></svg>
<svg class="a" style="left:149px;top:79px;" width="11" height="14" viewBox="0 0 11 14" shape-rendering="crispEdges"><rect x="3" y="0" width="1" height="1" fill="#000000"/><rect x="7" y="0" width="1" height="1" fill="#000000"/><rect x="3" y="1" width="1" height="1" fill="#000000"/><rect x="7" y="1" width="1" height="1" fill="#000000"/><rect x="3" y="2" width="1" height="1" fill="#000000"/><rect x="7" y="2" width="1" height="1" fill="#000000"/><rect x="3" y="3" width="2" height="1" fill="#000000"/><rect x="6" y="3" width="2" height="1" fill="#000000"/><rect x="4" y="4" width="1" height="1" fill="#000000"/><rect x="6" y="4" width="1" height="1" fill="#000000"/><rect x="4" y="5" width="3" height="1" fill="#000000"/><rect x="5" y="6" width="1" height="1" fill="#000000"/><rect x="6" y="7" width="3" height="1" fill="#000080"/><rect x="2" y="8" width="2" height="1" fill="#000080"/><rect x="5" y="8" width="1" height="1" fill="#000080"/><rect x="9" y="8" width="1" height="1" fill="#000080"/><rect x="1" y="9" width="1" height="1" fill="#000080"/><rect x="4" y="9" width="2" height="1" fill="#000080"/><rect x="9" y="9" width="1" height="1" fill="#000080"/><rect x="1" y="10" width="1" height="1" fill="#000080"/><rect x="4" y="10" width="2" height="1" fill="#000080"/><rect x="9" y="10" width="1" height="1" fill="#000080"/><rect x="1" y="11" width="1" height="1" fill="#000080"/><rect x="4" y="11" width="2" height="1" fill="#000080"/><rect x="9" y="11" width="1" height="1" fill="#000080"/><rect x="1" y="12" width="1" height="1" fill="#000080"/><rect x="4" y="12" width="1" height="1" fill="#000080"/><rect x="6" y="12" width="3" height="1" fill="#000080"/><rect x="2" y="13" width="2" height="1" fill="#000080"/></svg>
<svg class="a" style="left:170px;top:80px;" width="16" height="13" viewBox="0 0 16 13" shape-rendering="crispEdges"><rect x="0" y="0" width="7" height="1" fill="#000000"/><rect x="0" y="1" width="1" height="1" fill="#000000"/><rect x="1" y="1" width="5" height="1" fill="#FFFFFF"/><rect x="6" y="1" width="2" height="1" fill="#000000"/><rect x="0" y="2" width="1" height="1" fill="#000000"/><rect x="1" y="2" width="6" height="1" fill="#FFFFFF"/><rect x="7" y="2" width="2" height="1" fill="#000000"/><rect x="0" y="3" width="1" height="1" fill="#000000"/><rect x="1" y="3" width="1" height="1" fill="#FFFFFF"/><rect x="2" y="3" width="3" height="1" fill="#000000"/><rect x="5" y="3" width="1" height="1" fill="#FFFFFF"/><rect x="6" y="3" width="7" height="1" fill="#000000"/><rect x="0" y="4" width="1" height="1" fill="#000000"/><rect x="1" y="4" width="5" height="1" fill="#FFFFFF"/><rect x="6" y="4" width="1" height="1" fill="#000000"/><rect x="7" y="4" width="5" height="1" fill="#FFFFFF"/><rect x="12" y="4" width="2" height="1" fill="#000000"/><rect x="0" y="5" width="1" height="1" fill="#000000"/><rect x="1" y="5" width="1" height="1" fill="#FFFFFF"/><rect x="2" y="5" width="5" height="1" fill="#000000"/><rect x="7" y="5" width="6" height="1" fill="#FFFFFF"/><rect x="13" y="5" width="2" height="1" fill="#000000"/><rect x="0" y="6" width="1" height="1" fill="#000000"/><rect x="1" y="6" width="5" height="1" fill="#FFFFFF"/><rect x="6" y="6" width="1" height="1" fill="#000000"/><rect x="7" y="6" width="1" height="1" fill="#FFFFFF"/><rect x="8" y="6" width="2" height="1" fill="#000000"/><rect x="10" y="6" width="4" height="1" fill="#FFFFFF"/><rect x="14" y="6" width="1" height="1" fill="#000000"/><rect x="0" y="7" width="1" height="1" fill="#000000"/><rect x="1" y="7" width="1" height="1" fill="#FFFFFF"/><rect x="2" y="7" width="5" height="1" fill="#000000"/><rect x="7" y="7" width="7" height="1" fill="#FFFFFF"/><rect x="14" y="7" width="1" height="1" fill="#000000"/><rect x="0" y="8" width="1" height="1" fill="#000000"/><rect x="1" y="8" width="5" height="1" fill="#FFFFFF"/><rect x="6" y="8" width="1" height="1" fill="#000000"/><rect x="7" y="8" width="1" height="1" fill="#FFFFFF"/><rect x="8" y="8" width="5" height="1" fill="#000000"/><rect x="13" y="8" width="1" height="1" fill="#FFFFFF"/><rect x="14" y="8" width="1" height="1" fill="#000000"/><rect x="0" y="9" width="7" height="1" fill="#000000"/><rect x="7" y="9" width="7" height="1" fill="#FFFFFF"/><rect x="14" y="9" width="1" height="1" fill="#000000"/><rect x="6" y="10" width="1" height="1" fill="#000000"/><rect x="7" y="10" width="1" height="1" fill="#FFFFFF"/><rect x="8" y="10" width="5" height="1" fill="#000000"/><rect x="13" y="10" width="1" height="1" fill="#FFFFFF"/><rect x="14" y="10" width="1" height="1" fill="#000000"/><rect x="6" y="11" width="1" height="1" fill="#000000"/><rect x="7" y="11" width="7" height="1" fill="#FFFFFF"/><rect x="14" y="11" width="1" height="1" fill="#000000"/><rect x="6" y="12" width="9" height="1" fill="#000000"/></svg>
<svg class="a" style="left:192px;top:79px;" width="17" height="15" viewBox="0 0 17 15" shape-rendering="crispEdges"><rect x="0" y="1" width="14" height="12" rx="2" fill="#808080"/><rect x="5" y="0" width="4" height="2" fill="#808080"/><rect x="4" y="3" width="6" height="1" fill="#fff"/>
<rect x="7" y="7" width="9" height="7" fill="#D4D0C8" stroke="#fff" stroke-width="1"/><path d="M7.5 7.5 H14 M7.5 7.5 V13" stroke="#808080"/><rect x="9" y="9" width="5" height="1" fill="#808080"/><rect x="9" y="11" width="5" height="1" fill="#808080"/><rect x="3" y="10" width="1" height="1" fill="#fff"/></svg>
<svg class="a" style="left:215px;top:79px;" width="17" height="15" viewBox="0 0 17 15" shape-rendering="crispEdges"><rect x="0" y="4" width="6" height="5" fill="#808080"/><path d="M5 0 L8 3 L10 1 H14 L16 4 V10 L14 13 H10 L8 11 L6 14 L5 13 Z" fill="#808080" shape-rendering="geometricPrecision"/><path d="M16.5 3 V11 L14 14 H10" fill="none" stroke="#fff"/><rect x="1" y="9" width="5" height="1" fill="#fff"/></svg>
<svg class="a" style="left:246px;top:80px;" width="16" height="14" viewBox="0 0 16 14" shape-rendering="crispEdges"><rect x="0.5" y="0.5" width="12" height="12" fill="none" stroke="#808080"/><rect x="1.5" y="1.5" width="10" height="10" fill="none" stroke="#D4D0C8"/><rect x="2.5" y="2.5" width="8" height="8" fill="#fff" stroke="#000"/><rect x="4" y="6" width="5" height="1" fill="#000"/><rect x="6" y="4" width="1" height="5" fill="#000"/><rect x="14" y="6" width="1" height="1" fill="#000"/><rect x="1" y="1" width="11" height="1" fill="#808080"/></svg>
<svg class="a" style="left:269px;top:80px;" width="16" height="14" viewBox="0 0 16 14" shape-rendering="crispEdges"><rect x="0.5" y="0.5" width="12" height="12" fill="none" stroke="#808080"/><rect x="2.5" y="2.5" width="8" height="8" fill="#fff" stroke="#000"/><rect x="4" y="6" width="5" height="1" fill="#000"/><rect x="14" y="6" width="1" height="1" fill="#000"/><rect x="1" y="1" width="11" height="1" fill="#808080"/></svg>
<svg class="a" style="left:293px;top:79px;" width="14" height="13" viewBox="0 0 14 13" shape-rendering="crispEdges"><rect x="0" y="0" width="14" height="1" fill="#000000"/><rect x="0" y="1" width="1" height="1" fill="#000000"/><rect x="1" y="1" width="6" height="1" fill="#FFFFFF"/><rect x="7" y="1" width="1" height="1" fill="#000000"/><rect x="8" y="1" width="5" height="1" fill="#FFFFFF"/><rect x="13" y="1" width="1" height="1" fill="#000000"/><rect x="0" y="2" width="1" height="1" fill="#000000"/><rect x="1" y="2" width="1" height="1" fill="#FFFFFF"/><rect x="2" y="2" width="1" height="1" fill="#000000"/><rect x="3" y="2" width="1" height="1" fill="#808080"/><rect x="4" y="2" width="1" height="1" fill="#FFFFFF"/><rect x="5" y="2" width="1" height="1" fill="#808080"/><rect x="6" y="2" width="1" height="1" fill="#FFFFFF"/><rect x="7" y="2" width="1" height="1" fill="#000000"/><rect x="8" y="2" width="1" height="1" fill="#FFFFFF"/><rect x="9" y="2" width="1" height="1" fill="#808080"/><rect x="10" y="2" width="1" height="1" fill="#FFFFFF"/><rect x="11" y="2" width="1" height="1" fill="#000000"/><rect x="12" y="2" width="1" height="1" fill="#FFFFFF"/><rect x="13" y="2" width="1" height="1" fill="#000000"/><rect x="0" y="3" width="1" height="1" fill="#000000"/><rect x="1" y="3" width="1" height="1" fill="#FFFFFF"/><rect x="2" y="3" width="1" height="1" fill="#808080"/><rect x="3" y="3" width="8" height="1" fill="#FFFFFF"/><rect x="11" y="3" width="1" height="1" fill="#808080"/><rect x="12" y="3" width="1" height="1" fill="#FFFFFF"/><rect x="13" y="3" width="1" height="1" fill="#000000"/><rect x="0" y="4" width="1" height="1" fill="#000000"/><rect x="1" y="4" width="6" height="1" fill="#FFFFFF"/><rect x="7" y="4" width="1" height="1" fill="#000000"/><rect x="8" y="4" width="5" height="1" fill="#FFFFFF"/><rect x="13" y="4" width="1" height="1" fill="#000000"/><rect x="0" y="5" width="1" height="1" fill="#000000"/><rect x="1" y="5" width="1" height="1" fill="#FFFFFF"/><rect x="2" y="5" width="1" height="1" fill="#808080"/><rect x="3" y="5" width="4" height="1" fill="#FFFFFF"/><rect x="7" y="5" width="1" height="1" fill="#000000"/><rect x="8" y="5" width="3" height="1" fill="#FFFFFF"/><rect x="11" y="5" width="1" height="1" fill="#808080"/><rect x="12" y="5" width="1" height="1" fill="#FFFFFF"/><rect x="13" y="5" width="1" height="1" fill="#000000"/><rect x="0" y="6" width="2" height="1" fill="#000000"/><rect x="2" y="6" width="3" height="1" fill="#FFFFFF"/><rect x="5" y="6" width="5" height="1" fill="#000000"/><rect x="10" y="6" width="2" height="1" fill="#FFFFFF"/><rect x="12" y="6" width="2" height="1" fill="#000000"/><rect x="0" y="7" width="1" height="1" fill="#000000"/><rect x="1" y="7" width="1" height="1" fill="#FFFFFF"/><rect x="2" y="7" width="1" height="1" fill="#808080"/><rect x="3" y="7" width="4" height="1" fill="#FFFFFF"/><rect x="7" y="7" width="1" height="1" fill="#000000"/><rect x="8" y="7" width="3" height="1" fill="#FFFFFF"/><rect x="11" y="7" width="1" height="1" fill="#808080"/><rect x="12" y="7" width="1" height="1" fill="#FFFFFF"/><rect x="13" y="7" width="1" height="1" fill="#000000"/><rect x="0" y="8" width="1" height="1" fill="#000000"/><rect x="1" y="8" width="6" height="1" fill="#FFFFFF"/><rect x="7" y="8" width="1" height="1" fill="#000000"/><rect x="8" y="8" width="5" height="1" fill="#FFFFFF"/><rect x="13" y="8" width="1" height="1" fill="#000000"/><rect x="0" y="9" width="1" height="1" fill="#000000"/><rect x="1" y="9" width="1" height="1" fill="#FFFFFF"/><rect x="2" y="9" width="1" height="1" fill="#808080"/><rect x="3" y="9" width="8" height="1" fill="#FFFFFF"/><rect x="11" y="9" width="1" height="1" fill="#808080"/><rect x="12" y="9" width="1" height="1" fill="#FFFFFF"/><rect x="13" y="9" width="1" height="1" fill="#000000"/><rect x="0" y="10" width="1" height="1" fill="#000000"/><rect x="1" y="10" width="1" height="1" fill="#FFFFFF"/><rect x="2" y="10" width="1" height="1" fill="#000000"/><rect x="3" y="10" width="1" height="1" fill="#808080"/><rect x="4" y="10" width="1" height="1" fill="#FFFFFF"/><rect x="5" y="10" width="1" height="1" fill="#808080"/><rect x="6" y="10" width="1" height="1" fill="#FFFFFF"/><rect x="7" y="10" width="1" height="1" fill="#000000"/><rect x="8" y="10" width="1" height="1" fill="#FFFFFF"/><rect x="9" y="10" width="1" height="1" fill="#808080"/><rect x="10" y="10" width="1" height="1" fill="#FFFFFF"/><rect x="11" y="10" width="1" height="1" fill="#000000"/><rect x="12" y="10" width="1" height="1" fill="#FFFFFF"/><rect x="13" y="10" width="1" height="1" fill="#000000"/><rect x="0" y="11" width="1" height="1" fill="#000000"/><rect x="1" y="11" width="6" height="1" fill="#FFFFFF"/><rect x="7" y="11" width="1" height="1" fill="#000000"/><rect x="8" y="11" width="5" height="1" fill="#FFFFFF"/><rect x="13" y="11" width="1" height="1" fill="#000000"/><rect x="0" y="12" width="14" height="1" fill="#000000"/></svg>
<svg class="a" style="left:316px;top:79px;" width="14" height="13" viewBox="0 0 14 13" shape-rendering="crispEdges"><rect x="0" y="0" width="14" height="1" fill="#000000"/><rect x="0" y="1" width="1" height="1" fill="#000000"/><rect x="1" y="1" width="6" height="1" fill="#FFFFFF"/><rect x="7" y="1" width="1" height="1" fill="#000000"/><rect x="8" y="1" width="5" height="1" fill="#FFFFFF"/><rect x="13" y="1" width="1" height="1" fill="#000000"/><rect x="0" y="2" width="1" height="1" fill="#000000"/><rect x="1" y="2" width="1" height="1" fill="#FFFFFF"/><rect x="2" y="2" width="1" height="1" fill="#000000"/><rect x="3" y="2" width="1" height="1" fill="#808080"/><rect x="4" y="2" width="1" height="1" fill="#FFFFFF"/><rect x="5" y="2" width="1" height="1" fill="#808080"/><rect x="6" y="2" width="1" height="1" fill="#FFFFFF"/><rect x="7" y="2" width="1" height="1" fill="#000000"/><rect x="8" y="2" width="1" height="1" fill="#FFFFFF"/><rect x="9" y="2" width="1" height="1" fill="#808080"/><rect x="10" y="2" width="1" height="1" fill="#FFFFFF"/><rect x="11" y="2" width="1" height="1" fill="#000000"/><rect x="12" y="2" width="1" height="1" fill="#FFFFFF"/><rect x="13" y="2" width="1" height="1" fill="#000000"/><rect x="0" y="3" width="1" height="1" fill="#000000"/><rect x="1" y="3" width="1" height="1" fill="#FFFFFF"/><rect x="2" y="3" width="1" height="1" fill="#808080"/><rect x="3" y="3" width="8" height="1" fill="#FFFFFF"/><rect x="11" y="3" width="1" height="1" fill="#808080"/><rect x="12" y="3" width="1" height="1" fill="#FFFFFF"/><rect x="13" y="3" width="1" height="1" fill="#000000"/><rect x="0" y="4" width="1" height="1" fill="#000000"/><rect x="1" y="4" width="12" height="1" fill="#FFFFFF"/><rect x="13" y="4" width="1" height="1" fill="#000000"/><rect x="0" y="5" width="1" height="1" fill="#000000"/><rect x="1" y="5" width="1" height="1" fill="#FFFFFF"/><rect x="2" y="5" width="1" height="1" fill="#808080"/><rect x="3" y="5" width="8" height="1" fill="#FFFFFF"/><rect x="11" y="5" width="1" height="1" fill="#808080"/><rect x="12" y="5" width="1" height="1" fill="#FFFFFF"/><rect x="13" y="5" width="1" height="1" fill="#000000"/><rect x="0" y="6" width="2" height="1" fill="#000000"/><rect x="2" y="6" width="3" height="1" fill="#FFFFFF"/><rect x="5" y="6" width="5" height="1" fill="#000000"/><rect x="10" y="6" width="2" height="1" fill="#FFFFFF"/><rect x="12" y="6" width="2" height="1" fill="#000000"/><rect x="0" y="7" width="1" height="1" fill="#000000"/><rect x="1" y="7" width="1" height="1" fill="#FFFFFF"/><rect x="2" y="7" width="1" height="1" fill="#808080"/><rect x="3" y="7" width="8" height="1" fill="#FFFFFF"/><rect x="11" y="7" width="1" height="1" fill="#808080"/><rect x="12" y="7" width="1" height="1" fill="#FFFFFF"/><rect x="13" y="7" width="1" height="1" fill="#000000"/><rect x="0" y="8" width="1" height="1" fill="#000000"/><rect x="1" y="8" width="12" height="1" fill="#FFFFFF"/><rect x="13" y="8" width="1" height="1" fill="#000000"/><rect x="0" y="9" width="1" height="1" fill="#000000"/><rect x="1" y="9" width="1" height="1" fill="#FFFFFF"/><rect x="2" y="9" width="1" height="1" fill="#808080"/><rect x="3" y="9" width="8" height="1" fill="#FFFFFF"/><rect x="11" y="9" width="1" height="1" fill="#808080"/><rect x="12" y="9" width="1" height="1" fill="#FFFFFF"/><rect x="13" y="9" width="1" height="1" fill="#000000"/><rect x="0" y="10" width="1" height="1" fill="#000000"/><rect x="1" y="10" width="1" height="1" fill="#FFFFFF"/><rect x="2" y="10" width="1" height="1" fill="#000000"/><rect x="3" y="10" width="1" height="1" fill="#808080"/><rect x="4" y="10" width="1" height="1" fill="#FFFFFF"/><rect x="5" y="10" width="1" height="1" fill="#808080"/><rect x="6" y="10" width="1" height="1" fill="#FFFFFF"/><rect x="7" y="10" width="1" height="1" fill="#000000"/><rect x="8" y="10" width="1" height="1" fill="#FFFFFF"/><rect x="9" y="10" width="1" height="1" fill="#808080"/><rect x="10" y="10" width="1" height="1" fill="#FFFFFF"/><rect x="11" y="10" width="1" height="1" fill="#000000"/><rect x="12" y="10" width="1" height="1" fill="#FFFFFF"/><rect x="13" y="10" width="1" height="1" fill="#000000"/><rect x="0" y="11" width="1" height="1" fill="#000000"/><rect x="1" y="11" width="6" height="1" fill="#FFFFFF"/><rect x="7" y="11" width="1" height="1" fill="#000000"/><rect x="8" y="11" width="5" height="1" fill="#FFFFFF"/><rect x="13" y="11" width="1" height="1" fill="#000000"/><rect x="0" y="12" width="14" height="1" fill="#000000"/></svg>
<svg class="a" style="left:344px;top:76px;" width="19" height="18" viewBox="0 0 19 18" shape-rendering="crispEdges"><rect x="2" y="2" width="1" height="1" fill="#000000"/><rect x="5" y="2" width="1" height="1" fill="#808000"/><rect x="6" y="2" width="2" height="1" fill="#FFFF00"/><rect x="2" y="3" width="1" height="1" fill="#000000"/><rect x="4" y="3" width="1" height="1" fill="#FFFF00"/><rect x="5" y="3" width="1" height="1" fill="#FFFFFF"/><rect x="6" y="3" width="1" height="1" fill="#FFFF00"/><rect x="7" y="3" width="1" height="1" fill="#FFFFFF"/><rect x="8" y="3" width="1" height="1" fill="#FFFF00"/><rect x="9" y="3" width="1" height="1" fill="#FFFFFF"/><rect x="10" y="3" width="1" height="1" fill="#808000"/><rect x="2" y="4" width="3" height="1" fill="#000000"/><rect x="5" y="4" width="1" height="1" fill="#FFFF00"/><rect x="6" y="4" width="1" height="1" fill="#FFFFFF"/><rect x="7" y="4" width="1" height="1" fill="#FFFF00"/><rect x="8" y="4" width="1" height="1" fill="#FFFFFF"/><rect x="9" y="4" width="1" height="1" fill="#FFFF00"/><rect x="10" y="4" width="1" height="1" fill="#FFFFFF"/><rect x="11" y="4" width="1" height="1" fill="#000000"/><rect x="2" y="5" width="1" height="1" fill="#000000"/><rect x="5" y="5" width="1" height="1" fill="#FFFF00"/><rect x="6" y="5" width="1" height="1" fill="#FFFFFF"/><rect x="7" y="5" width="1" height="1" fill="#FFFF00"/><rect x="8" y="5" width="1" height="1" fill="#FFFFFF"/><rect x="9" y="5" width="1" height="1" fill="#FFFF00"/><rect x="10" y="5" width="1" height="1" fill="#FFFFFF"/><rect x="11" y="5" width="1" height="1" fill="#000000"/><rect x="2" y="6" width="1" height="1" fill="#000000"/><rect x="6" y="6" width="5" height="1" fill="#000000"/><rect x="2" y="7" width="1" height="1" fill="#000000"/><rect x="8" y="7" width="1" height="1" fill="#000000"/><rect x="11" y="7" width="1" height="1" fill="#808000"/><rect x="12" y="7" width="2" height="1" fill="#FFFF00"/><rect x="2" y="8" width="1" height="1" fill="#000000"/><rect x="8" y="8" width="1" height="1" fill="#000000"/><rect x="10" y="8" width="1" height="1" fill="#FFFF00"/><rect x="11" y="8" width="1" height="1" fill="#FFFFFF"/><rect x="12" y="8" width="1" height="1" fill="#FFFF00"/><rect x="13" y="8" width="1" height="1" fill="#FFFFFF"/><rect x="14" y="8" width="1" height="1" fill="#FFFF00"/><rect x="15" y="8" width="1" height="1" fill="#FFFFFF"/><rect x="16" y="8" width="1" height="1" fill="#808000"/><rect x="2" y="9" width="1" height="1" fill="#000000"/><rect x="8" y="9" width="3" height="1" fill="#000000"/><rect x="11" y="9" width="1" height="1" fill="#FFFF00"/><rect x="12" y="9" width="1" height="1" fill="#FFFFFF"/><rect x="13" y="9" width="1" height="1" fill="#FFFF00"/><rect x="14" y="9" width="1" height="1" fill="#FFFFFF"/><rect x="15" y="9" width="1" height="1" fill="#FFFF00"/><rect x="16" y="9" width="1" height="1" fill="#FFFFFF"/><rect x="17" y="9" width="1" height="1" fill="#000000"/><rect x="2" y="10" width="1" height="1" fill="#000000"/><rect x="8" y="10" width="1" height="1" fill="#000000"/><rect x="11" y="10" width="1" height="1" fill="#FFFF00"/><rect x="12" y="10" width="1" height="1" fill="#FFFFFF"/><rect x="13" y="10" width="1" height="1" fill="#FFFF00"/><rect x="14" y="10" width="1" height="1" fill="#FFFFFF"/><rect x="15" y="10" width="1" height="1" fill="#FFFF00"/><rect x="16" y="10" width="1" height="1" fill="#FFFFFF"/><rect x="17" y="10" width="1" height="1" fill="#000000"/><rect x="2" y="11" width="1" height="1" fill="#000000"/><rect x="8" y="11" width="1" height="1" fill="#000000"/><rect x="12" y="11" width="5" height="1" fill="#000000"/><rect x="8" y="12" width="1" height="1" fill="#000000"/><rect x="2" y="13" width="1" height="1" fill="#000000"/><rect x="8" y="13" width="1" height="1" fill="#000000"/><rect x="11" y="13" width="1" height="1" fill="#808000"/><rect x="12" y="13" width="2" height="1" fill="#FFFF00"/><rect x="8" y="14" width="1" height="1" fill="#000000"/><rect x="10" y="14" width="1" height="1" fill="#FFFF00"/><rect x="11" y="14" width="1" height="1" fill="#FFFFFF"/><rect x="12" y="14" width="1" height="1" fill="#FFFF00"/><rect x="13" y="14" width="1" height="1" fill="#FFFFFF"/><rect x="14" y="14" width="1" height="1" fill="#FFFF00"/><rect x="15" y="14" width="1" height="1" fill="#FFFFFF"/><rect x="16" y="14" width="1" height="1" fill="#808000"/><rect x="2" y="15" width="1" height="1" fill="#000000"/><rect x="8" y="15" width="3" height="1" fill="#000000"/><rect x="11" y="15" width="1" height="1" fill="#FFFF00"/><rect x="12" y="15" width="1" height="1" fill="#FFFFFF"/><rect x="13" y="15" width="1" height="1" fill="#FFFF00"/><rect x="14" y="15" width="1" height="1" fill="#FFFFFF"/><rect x="15" y="15" width="1" height="1" fill="#FFFF00"/><rect x="16" y="15" width="1" height="1" fill="#FFFFFF"/><rect x="17" y="15" width="1" height="1" fill="#000000"/><rect x="11" y="16" width="1" height="1" fill="#FFFF00"/><rect x="12" y="16" width="1" height="1" fill="#FFFFFF"/><rect x="13" y="16" width="1" height="1" fill="#FFFF00"/><rect x="14" y="16" width="1" height="1" fill="#FFFFFF"/><rect x="15" y="16" width="1" height="1" fill="#FFFF00"/><rect x="16" y="16" width="1" height="1" fill="#FFFFFF"/><rect x="17" y="16" width="1" height="1" fill="#000000"/><rect x="12" y="17" width="5" height="1" fill="#000000"/></svg>
<svg class="a" style="left:374px;top:75px;" width="23" height="22" viewBox="0 0 23 22" shape-rendering="crispEdges"><rect x="0" y="0" width="23" height="22" fill="url(#dith)"/><rect x="0" y="0" width="22" height="1" fill="#808080"/><rect x="0" y="0" width="1" height="21" fill="#808080"/><rect x="0" y="21" width="23" height="1" fill="#fff"/><rect x="22" y="0" width="1" height="22" fill="#fff"/></svg>
<svg class="a" style="left:379px;top:81px;" width="15" height="11" viewBox="0 0 15 11" shape-rendering="crispEdges"><rect x="0" y="0" width="15" height="1" fill="#000000"/><rect x="0" y="1" width="2" height="1" fill="#000000"/><rect x="2" y="1" width="1" height="1" fill="#008080"/><rect x="3" y="1" width="9" height="1" fill="#FFFFFF"/><rect x="12" y="1" width="1" height="1" fill="#008080"/><rect x="13" y="1" width="2" height="1" fill="#000000"/><rect x="1" y="2" width="2" height="1" fill="#000000"/><rect x="3" y="2" width="1" height="1" fill="#008080"/><rect x="4" y="2" width="7" height="1" fill="#FFFFFF"/><rect x="11" y="2" width="1" height="1" fill="#008080"/><rect x="12" y="2" width="2" height="1" fill="#000000"/><rect x="2" y="3" width="2" height="1" fill="#000000"/><rect x="4" y="3" width="6" height="1" fill="#FFFFFF"/><rect x="10" y="3" width="1" height="1" fill="#008080"/><rect x="11" y="3" width="2" height="1" fill="#000000"/><rect x="3" y="4" width="2" height="1" fill="#000000"/><rect x="5" y="4" width="4" height="1" fill="#FFFFFF"/><rect x="9" y="4" width="1" height="1" fill="#008080"/><rect x="10" y="4" width="2" height="1" fill="#000000"/><rect x="4" y="5" width="2" height="1" fill="#000000"/><rect x="6" y="5" width="2" height="1" fill="#FFFFFF"/><rect x="8" y="5" width="1" height="1" fill="#008080"/><rect x="9" y="5" width="2" height="1" fill="#000000"/><rect x="5" y="6" width="1" height="1" fill="#000000"/><rect x="6" y="6" width="2" height="1" fill="#FFFFFF"/><rect x="8" y="6" width="1" height="1" fill="#008080"/><rect x="9" y="6" width="1" height="1" fill="#000000"/><rect x="5" y="7" width="1" height="1" fill="#000000"/><rect x="6" y="7" width="3" height="1" fill="#FFFFFF"/><rect x="9" y="7" width="1" height="1" fill="#000000"/><rect x="5" y="8" width="1" height="1" fill="#000000"/><rect x="6" y="8" width="1" height="1" fill="#008080"/><rect x="7" y="8" width="2" height="1" fill="#FFFFFF"/><rect x="9" y="8" width="1" height="1" fill="#000000"/><rect x="5" y="9" width="1" height="1" fill="#000000"/><rect x="6" y="9" width="1" height="1" fill="#008080"/><rect x="7" y="9" width="2" height="1" fill="#FFFFFF"/><rect x="9" y="9" width="1" height="1" fill="#000000"/><rect x="5" y="10" width="5" height="1" fill="#000000"/></svg>
<svg class="a" style="left:400px;top:79px;" width="17" height="14" viewBox="0 0 17 14" shape-rendering="crispEdges"><rect x="5" y="0" width="6" height="1" fill="#808080"/><rect x="3" y="1" width="10" height="1" fill="#808080"/><rect x="2" y="2" width="12" height="1" fill="#808080"/><rect x="1" y="3" width="2" height="1" fill="#808080"/><rect x="4" y="3" width="1" height="1" fill="#808080"/><rect x="6" y="3" width="1" height="1" fill="#808080"/><rect x="8" y="3" width="1" height="1" fill="#808080"/><rect x="10" y="3" width="1" height="1" fill="#808080"/><rect x="12" y="3" width="2" height="1" fill="#808080"/><rect x="1" y="4" width="1" height="1" fill="#808080"/><rect x="3" y="4" width="1" height="1" fill="#808080"/><rect x="5" y="4" width="1" height="1" fill="#808080"/><rect x="7" y="4" width="1" height="1" fill="#808080"/><rect x="9" y="4" width="1" height="1" fill="#808080"/><rect x="11" y="4" width="1" height="1" fill="#808080"/><rect x="13" y="4" width="1" height="1" fill="#808080"/><rect x="1" y="5" width="2" height="1" fill="#000000"/><rect x="3" y="5" width="1" height="1" fill="#808080"/><rect x="4" y="5" width="2" height="1" fill="#000000"/><rect x="6" y="5" width="1" height="1" fill="#808080"/><rect x="8" y="5" width="1" height="1" fill="#808080"/><rect x="9" y="5" width="2" height="1" fill="#000000"/><rect x="12" y="5" width="2" height="1" fill="#000000"/><rect x="14" y="5" width="1" height="1" fill="#808080"/><rect x="1" y="6" width="2" height="1" fill="#000000"/><rect x="4" y="6" width="2" height="1" fill="#000000"/><rect x="7" y="6" width="1" height="1" fill="#808080"/><rect x="8" y="6" width="2" height="1" fill="#000000"/><rect x="11" y="6" width="1" height="1" fill="#808080"/><rect x="12" y="6" width="3" height="1" fill="#000000"/><rect x="15" y="6" width="1" height="1" fill="#808080"/><rect x="1" y="7" width="2" height="1" fill="#000000"/><rect x="3" y="7" width="1" height="1" fill="#808080"/><rect x="4" y="7" width="2" height="1" fill="#000000"/><rect x="7" y="7" width="2" height="1" fill="#000000"/><rect x="10" y="7" width="1" height="1" fill="#808080"/><rect x="12" y="7" width="3" height="1" fill="#000000"/><rect x="15" y="7" width="1" height="1" fill="#808080"/><rect x="1" y="8" width="2" height="1" fill="#000000"/><rect x="4" y="8" width="4" height="1" fill="#000000"/><rect x="9" y="8" width="1" height="1" fill="#808080"/><rect x="11" y="8" width="2" height="1" fill="#000000"/><rect x="14" y="8" width="2" height="1" fill="#000000"/><rect x="1" y="9" width="2" height="1" fill="#000000"/><rect x="3" y="9" width="1" height="1" fill="#808080"/><rect x="4" y="9" width="4" height="1" fill="#000000"/><rect x="8" y="9" width="1" height="1" fill="#808080"/><rect x="10" y="9" width="1" height="1" fill="#808080"/><rect x="11" y="9" width="2" height="1" fill="#000000"/><rect x="14" y="9" width="2" height="1" fill="#000000"/><rect x="1" y="10" width="2" height="1" fill="#000000"/><rect x="4" y="10" width="2" height="1" fill="#000000"/><rect x="7" y="10" width="2" height="1" fill="#000000"/><rect x="10" y="10" width="6" height="1" fill="#000000"/><rect x="1" y="11" width="2" height="1" fill="#000000"/><rect x="3" y="11" width="1" height="1" fill="#808080"/><rect x="4" y="11" width="2" height="1" fill="#000000"/><rect x="7" y="11" width="1" height="1" fill="#808080"/><rect x="8" y="11" width="4" height="1" fill="#000000"/><rect x="14" y="11" width="2" height="1" fill="#000000"/><rect x="1" y="12" width="2" height="1" fill="#000000"/><rect x="4" y="12" width="2" height="1" fill="#000000"/><rect x="8" y="12" width="3" height="1" fill="#000000"/><rect x="14" y="12" width="2" height="1" fill="#000000"/></svg>
<svg class="a" style="left:431px;top:78px;" width="17" height="15" viewBox="0 0 17 15" shape-rendering="crispEdges"><path d="M0.5 3.5 H5 L6 2.5 H10.5 V5.5 H12.5 V8 H4 L0.5 13.5 Z" fill="#0080FF" stroke="#000" shape-rendering="geometricPrecision"/><path d="M0.5 14.5 L4 8 H16 L12.5 14.5 Z" fill="#80FFFF" stroke="#000" shape-rendering="geometricPrecision"/><path d="M12 0.5 H14.5 M12.5 0.5 V3 H15 V5 M15.5 3 V6 H12" fill="none" stroke="#000" stroke-width="1"/></svg>
<svg class="a" style="left:454px;top:78px;" width="18" height="16" viewBox="0 0 18 16" shape-rendering="crispEdges"><path d="M0 4 L2 1 H6 L8 3 H12 V15 H0 Z" fill="#808080" shape-rendering="geometricPrecision"/><rect x="0" y="15" width="13" height="1" fill="#fff"/><rect x="12" y="3" width="1" height="13" fill="#fff"/><path d="M10 2.5 Q12 0 14.5 2 V5 M13 3.5 L14.5 5 L16 3.5" fill="none" stroke="#fff" stroke-width="1.2" shape-rendering="geometricPrecision"/><path d="M9.5 2 Q11.5 -0.5 14 1.5 V4" fill="none" stroke="#808080" stroke-width="1" shape-rendering="geometricPrecision"/></svg>
<div class="a sunken" style="left:12px;top:110px;width:191px;height:395px;background:#FFFFE8"></div>
<svg width="0" height="0" style="position:absolute"><defs><pattern id="dith" width="2" height="2" patternUnits="userSpaceOnUse"><rect width="2" height="2" fill="#D4D0C8"/><rect width="1" height="1" fill="#fff"/><rect x="1" y="1" width="1" height="1" fill="#fff"/></pattern><pattern id="chk" width="2" height="2" patternUnits="userSpaceOnUse"><rect width="1" height="1" fill="#FFFF00"/><rect x="1" y="1" width="1" height="1" fill="#FFFF00"/></pattern></defs></svg>
<div class="a " style="left:14px;top:112px;width:187px;height:375px;overflow:hidden"><div class="a" style="left:10px;top:14px;width:1px;height:346px;background:repeating-linear-gradient(#808080 0 1px,transparent 1px 2px)"></div><div class="a" style="left:34px;top:16px;width:1px;height:264px;background:repeating-linear-gradient(#808080 0 1px,transparent 1px 2px)"></div><div class="a" style="left:16px;top:8px;width:8px;height:1px;background:repeating-linear-gradient(90deg,#808080 0 1px,transparent 1px 2px)"></div><div class="a" style="left:6px;top:4px;width:9px;height:9px;border:1px solid #808080;background:#fff"></div><div class="a" style="left:8px;top:8px;width:5px;height:1px;background:#000"></div><svg class="a" style="left:24px;top:1px;" width="19" height="14" viewBox="0 0 19 14" shape-rendering="crispEdges"><rect x="3" y="0" width="7" height="1" fill="#808080"/><rect x="2" y="1" width="1" height="1" fill="#808080"/><rect x="3" y="1" width="7" height="1" fill="#FF0000"/><rect x="10" y="1" width="1" height="1" fill="#808080"/><rect x="2" y="2" width="1" height="1" fill="#808080"/><rect x="3" y="2" width="1" height="1" fill="#FF0000"/><rect x="4" y="2" width="6" height="1" fill="#FFFF00"/><rect x="10" y="2" width="1" height="1" fill="#FF0000"/><rect x="11" y="2" width="1" height="1" fill="#808080"/><rect x="12" y="2" width="6" height="1" fill="#008000"/><rect x="2" y="3" width="1" height="1" fill="#808080"/><rect x="3" y="3" width="2" height="1" fill="#FF0000"/><rect x="5" y="3" width="7" height="1" fill="#FFFF00"/><rect x="12" y="3" width="5" height="1" fill="#FF0000"/><rect x="17" y="3" width="1" height="1" fill="#008000"/><rect x="18" y="3" width="1" height="1" fill="#000000"/><rect x="2" y="4" width="1" height="1" fill="#808080"/><rect x="3" y="4" width="1" height="1" fill="#FF0000"/><rect x="4" y="4" width="13" height="1" fill="#FFFF00"/><rect x="17" y="4" width="1" height="1" fill="#FF0000"/><rect x="18" y="4" width="1" height="1" fill="#000000"/><rect x="2" y="5" width="1" height="1" fill="#808080"/><rect x="3" y="5" width="1" height="1" fill="#FF0000"/><rect x="4" y="5" width="13" height="1" fill="#FFFF00"/><rect x="17" y="5" width="1" height="1" fill="#FF0000"/><rect x="18" y="5" width="1" height="1" fill="#000000"/><rect x="2" y="6" width="1" height="1" fill="#808080"/><rect x="3" y="6" width="1" height="1" fill="#FF0000"/><rect x="4" y="6" width="13" height="1" fill="#FFFF00"/><rect x="17" y="6" width="1" height="1" fill="#FF0000"/><rect x="18" y="6" width="1" height="1" fill="#000000"/><rect x="1" y="7" width="1" height="1" fill="#808080"/><rect x="2" y="7" width="11" height="1" fill="#FF0000"/><rect x="13" y="7" width="1" height="1" fill="#000000"/><rect x="14" y="7" width="3" height="1" fill="#FFFF00"/><rect x="17" y="7" width="1" height="1" fill="#FF0000"/><rect x="18" y="7" width="1" height="1" fill="#000000"/><rect x="1" y="8" width="1" height="1" fill="#808080"/><rect x="2" y="8" width="12" height="1" fill="#FFFF00"/><rect x="14" y="8" width="1" height="1" fill="#808080"/><rect x="15" y="8" width="2" height="1" fill="#FFFF00"/><rect x="17" y="8" width="1" height="1" fill="#FF0000"/><rect x="18" y="8" width="1" height="1" fill="#000000"/><rect x="2" y="9" width="1" height="1" fill="#808080"/><rect x="3" y="9" width="12" height="1" fill="#FFFF00"/><rect x="15" y="9" width="1" height="1" fill="#808080"/><rect x="16" y="9" width="1" height="1" fill="#FFFF00"/><rect x="17" y="9" width="1" height="1" fill="#FF0000"/><rect x="18" y="9" width="1" height="1" fill="#000000"/><rect x="3" y="10" width="1" height="1" fill="#808080"/><rect x="4" y="10" width="12" height="1" fill="#FFFF00"/><rect x="16" y="10" width="1" height="1" fill="#808080"/><rect x="17" y="10" width="1" height="1" fill="#FF0000"/><rect x="18" y="10" width="1" height="1" fill="#000000"/><rect x="4" y="11" width="1" height="1" fill="#808080"/><rect x="5" y="11" width="12" height="1" fill="#FFFF00"/><rect x="17" y="11" width="2" height="1" fill="#000000"/><rect x="5" y="12" width="1" height="1" fill="#808080"/><rect x="6" y="12" width="11" height="1" fill="#FFFF00"/><rect x="17" y="12" width="2" height="1" fill="#000000"/><rect x="5" y="13" width="14" height="1" fill="#000000"/></svg><div class="a t" style="left:50px;top:1px;"><span style="letter-spacing:-1px">ΟΙΚΟΔΟΜΙΚΑ</span> <span style="letter-spacing:-0.2px">(12.447.993)</span></div><div class="a" style="left:40px;top:24px;width:8px;height:1px;background:repeating-linear-gradient(90deg,#808080 0 1px,transparent 1px 2px)"></div><div class="a" style="left:30px;top:20px;width:9px;height:9px;border:1px solid #808080;background:#fff"></div><div class="a" style="left:32px;top:24px;width:5px;height:1px;background:#000"></div><div class="a" style="left:34px;top:22px;width:1px;height:5px;background:#000"></div><svg class="a" style="left:53px;top:17px" width="10" height="14" shape-rendering="crispEdges"><use href="#pg"/></svg><div class="a t" style="left:74px;top:17px;">1.1 (493.000)</div><div class="a" style="left:40px;top:40px;width:8px;height:1px;background:repeating-linear-gradient(90deg,#808080 0 1px,transparent 1px 2px)"></div><div class="a" style="left:30px;top:36px;width:9px;height:9px;border:1px solid #808080;background:#fff"></div><div class="a" style="left:32px;top:40px;width:5px;height:1px;background:#000"></div><div class="a" style="left:34px;top:38px;width:1px;height:5px;background:#000"></div><svg class="a" style="left:53px;top:33px" width="10" height="14" shape-rendering="crispEdges"><use href="#pg"/></svg><div class="a t" style="left:74px;top:33px;">1.2 (332.200)</div><div class="a" style="left:40px;top:56px;width:8px;height:1px;background:repeating-linear-gradient(90deg,#808080 0 1px,transparent 1px 2px)"></div><div class="a" style="left:30px;top:52px;width:9px;height:9px;border:1px solid #808080;background:#fff"></div><div class="a" style="left:32px;top:56px;width:5px;height:1px;background:#000"></div><div class="a" style="left:34px;top:54px;width:1px;height:5px;background:#000"></div><svg class="a" style="left:53px;top:49px" width="10" height="14" shape-rendering="crispEdges"><use href="#pg"/></svg><div class="a t" style="left:73px;top:48px;height:16px;width:66px;overflow:hidden;padding:1px 0 0 1px;background:#0A246A;color:#fff;outline:1px dotted #FFFF80;outline-offset:-1px;letter-spacing:-0.15px">1.3 (114.384)</div><div class="a" style="left:40px;top:72px;width:8px;height:1px;background:repeating-linear-gradient(90deg,#808080 0 1px,transparent 1px 2px)"></div><div class="a" style="left:30px;top:68px;width:9px;height:9px;border:1px solid #808080;background:#fff"></div><div class="a" style="left:32px;top:72px;width:5px;height:1px;background:#000"></div><div class="a" style="left:34px;top:70px;width:1px;height:5px;background:#000"></div><svg class="a" style="left:53px;top:65px" width="10" height="14" shape-rendering="crispEdges"><use href="#pg"/></svg><div class="a t" style="left:74px;top:65px;">1.4 (599.040)</div><div class="a" style="left:40px;top:88px;width:8px;height:1px;background:repeating-linear-gradient(90deg,#808080 0 1px,transparent 1px 2px)"></div><div class="a" style="left:30px;top:84px;width:9px;height:9px;border:1px solid #808080;background:#fff"></div><div class="a" style="left:32px;top:88px;width:5px;height:1px;background:#000"></div><div class="a" style="left:34px;top:86px;width:1px;height:5px;background:#000"></div><svg class="a" style="left:53px;top:81px" width="10" height="14" shape-rendering="crispEdges"><use href="#pg"/></svg><div class="a t" style="left:74px;top:81px;">1.5 (1.349.760)</div><div class="a" style="left:40px;top:104px;width:8px;height:1px;background:repeating-linear-gradient(90deg,#808080 0 1px,transparent 1px 2px)"></div><div class="a" style="left:30px;top:100px;width:9px;height:9px;border:1px solid #808080;background:#fff"></div><div class="a" style="left:32px;top:104px;width:5px;height:1px;background:#000"></div><div class="a" style="left:34px;top:102px;width:1px;height:5px;background:#000"></div><svg class="a" style="left:53px;top:97px" width="10" height="14" shape-rendering="crispEdges"><use href="#pg"/></svg><div class="a t" style="left:74px;top:97px;">1.6 (4.027.520)</div><div class="a" style="left:40px;top:120px;width:8px;height:1px;background:repeating-linear-gradient(90deg,#808080 0 1px,transparent 1px 2px)"></div><div class="a" style="left:30px;top:116px;width:9px;height:9px;border:1px solid #808080;background:#fff"></div><div class="a" style="left:32px;top:120px;width:5px;height:1px;background:#000"></div><div class="a" style="left:34px;top:118px;width:1px;height:5px;background:#000"></div><svg class="a" style="left:53px;top:113px" width="10" height="14" shape-rendering="crispEdges"><use href="#pg"/></svg><div class="a t" style="left:74px;top:113px;">1.7 (5.704.140)</div><div class="a" style="left:40px;top:136px;width:8px;height:1px;background:repeating-linear-gradient(90deg,#808080 0 1px,transparent 1px 2px)"></div><div class="a" style="left:30px;top:132px;width:9px;height:9px;border:1px solid #808080;background:#fff"></div><div class="a" style="left:32px;top:136px;width:5px;height:1px;background:#000"></div><div class="a" style="left:34px;top:134px;width:1px;height:5px;background:#000"></div><svg class="a" style="left:53px;top:129px" width="10" height="14" shape-rendering="crispEdges"><use href="#pg"/></svg><div class="a t" style="left:74px;top:129px;">1.8 (823.600)</div><div class="a" style="left:40px;top:152px;width:8px;height:1px;background:repeating-linear-gradient(90deg,#808080 0 1px,transparent 1px 2px)"></div><div class="a" style="left:30px;top:148px;width:9px;height:9px;border:1px solid #808080;background:#fff"></div><div class="a" style="left:32px;top:152px;width:5px;height:1px;background:#000"></div><div class="a" style="left:34px;top:150px;width:1px;height:5px;background:#000"></div><svg class="a" style="left:53px;top:145px" width="10" height="14" shape-rendering="crispEdges"><use href="#pg"/></svg><div class="a t" style="left:74px;top:145px;">1.9 (236.500)</div><div class="a" style="left:40px;top:168px;width:8px;height:1px;background:repeating-linear-gradient(90deg,#808080 0 1px,transparent 1px 2px)"></div><div class="a" style="left:30px;top:164px;width:9px;height:9px;border:1px solid #808080;background:#fff"></div><div class="a" style="left:32px;top:168px;width:5px;height:1px;background:#000"></div><div class="a" style="left:34px;top:166px;width:1px;height:5px;background:#000"></div><svg class="a" style="left:53px;top:161px" width="10" height="14" shape-rendering="crispEdges"><use href="#pg"/></svg><div class="a t" style="left:74px;top:161px;">1.10 (110.760)</div><div class="a" style="left:40px;top:184px;width:8px;height:1px;background:repeating-linear-gradient(90deg,#808080 0 1px,transparent 1px 2px)"></div><div class="a" style="left:30px;top:180px;width:9px;height:9px;border:1px solid #808080;background:#fff"></div><div class="a" style="left:32px;top:184px;width:5px;height:1px;background:#000"></div><div class="a" style="left:34px;top:182px;width:1px;height:5px;background:#000"></div><svg class="a" style="left:53px;top:177px" width="10" height="14" shape-rendering="crispEdges"><use href="#pg"/></svg><div class="a t" style="left:74px;top:177px;">1.11 (255.600)</div><div class="a" style="left:40px;top:200px;width:8px;height:1px;background:repeating-linear-gradient(90deg,#808080 0 1px,transparent 1px 2px)"></div><div class="a" style="left:30px;top:196px;width:9px;height:9px;border:1px solid #808080;background:#fff"></div><div class="a" style="left:32px;top:200px;width:5px;height:1px;background:#000"></div><div class="a" style="left:34px;top:198px;width:1px;height:5px;background:#000"></div><svg class="a" style="left:53px;top:193px" width="10" height="14" shape-rendering="crispEdges"><use href="#pg"/></svg><div class="a t" style="left:74px;top:193px;">1.12 (1.562.000)</div><div class="a" style="left:40px;top:216px;width:8px;height:1px;background:repeating-linear-gradient(90deg,#808080 0 1px,transparent 1px 2px)"></div><div class="a" style="left:30px;top:212px;width:9px;height:9px;border:1px solid #808080;background:#fff"></div><div class="a" style="left:32px;top:216px;width:5px;height:1px;background:#000"></div><div class="a" style="left:34px;top:214px;width:1px;height:5px;background:#000"></div><svg class="a" style="left:53px;top:209px" width="10" height="14" shape-rendering="crispEdges"><use href="#pg"/></svg><div class="a t" style="left:74px;top:209px;">1.13 (860.520)</div><div class="a" style="left:40px;top:232px;width:8px;height:1px;background:repeating-linear-gradient(90deg,#808080 0 1px,transparent 1px 2px)"></div><div class="a" style="left:30px;top:228px;width:9px;height:9px;border:1px solid #808080;background:#fff"></div><div class="a" style="left:32px;top:232px;width:5px;height:1px;background:#000"></div><div class="a" style="left:34px;top:230px;width:1px;height:5px;background:#000"></div><svg class="a" style="left:53px;top:225px" width="10" height="14" shape-rendering="crispEdges"><use href="#pg"/></svg><div class="a t" style="left:74px;top:225px;">1.14 (1.124.640)</div><div class="a" style="left:40px;top:248px;width:8px;height:1px;background:repeating-linear-gradient(90deg,#808080 0 1px,transparent 1px 2px)"></div><div class="a" style="left:30px;top:244px;width:9px;height:9px;border:1px solid #808080;background:#fff"></div><div class="a" style="left:32px;top:248px;width:5px;height:1px;background:#000"></div><div class="a" style="left:34px;top:246px;width:1px;height:5px;background:#000"></div><svg class="a" style="left:53px;top:241px" width="10" height="14" shape-rendering="crispEdges"><use href="#pg"/></svg><div class="a t" style="left:74px;top:241px;">1.15 (106.850)</div><div class="a" style="left:40px;top:264px;width:8px;height:1px;background:repeating-linear-gradient(90deg,#808080 0 1px,transparent 1px 2px)"></div><div class="a" style="left:30px;top:260px;width:9px;height:9px;border:1px solid #808080;background:#fff"></div><div class="a" style="left:32px;top:264px;width:5px;height:1px;background:#000"></div><div class="a" style="left:34px;top:262px;width:1px;height:5px;background:#000"></div><svg class="a" style="left:53px;top:257px" width="10" height="14" shape-rendering="crispEdges"><use href="#pg"/></svg><div class="a t" style="left:74px;top:257px;">1.16 (340.056)</div><div class="a" style="left:40px;top:280px;width:8px;height:1px;background:repeating-linear-gradient(90deg,#808080 0 1px,transparent 1px 2px)"></div><div class="a" style="left:30px;top:276px;width:9px;height:9px;border:1px solid #808080;background:#fff"></div><div class="a" style="left:32px;top:280px;width:5px;height:1px;background:#000"></div><div class="a" style="left:34px;top:278px;width:1px;height:5px;background:#000"></div><svg class="a" style="left:50px;top:273px;" width="14" height="12" viewBox="0 0 14 12" shape-rendering="crispEdges"><rect x="2" y="0" width="4" height="1" fill="#FFFF00"/><rect x="0" y="1" width="7" height="1" fill="#000000"/><rect x="1" y="2" width="5" height="1" fill="#FFFF00"/><rect x="6" y="2" width="1" height="1" fill="#000000"/><rect x="1" y="3" width="6" height="1" fill="#000000"/><rect x="2" y="4" width="4" height="1" fill="#FFFF00"/><rect x="6" y="4" width="1" height="1" fill="#000000"/><rect x="8" y="4" width="4" height="1" fill="#FFFF00"/><rect x="1" y="5" width="6" height="1" fill="#000000"/><rect x="8" y="5" width="5" height="1" fill="#000000"/><rect x="2" y="6" width="4" height="1" fill="#FFFF00"/><rect x="7" y="6" width="1" height="1" fill="#000000"/><rect x="8" y="6" width="4" height="1" fill="#FFFF00"/><rect x="1" y="7" width="12" height="1" fill="#000000"/><rect x="1" y="8" width="4" height="1" fill="#FFFF00"/><rect x="5" y="8" width="1" height="1" fill="#000000"/><rect x="7" y="8" width="5" height="1" fill="#FFFF00"/><rect x="1" y="9" width="5" height="1" fill="#000000"/><rect x="7" y="9" width="6" height="1" fill="#000000"/><rect x="1" y="10" width="4" height="1" fill="#FFFF00"/><rect x="7" y="10" width="4" height="1" fill="#FFFF00"/><rect x="1" y="11" width="4" height="1" fill="#000000"/><rect x="7" y="11" width="5" height="1" fill="#000000"/></svg><div class="a t" style="left:74px;top:273px;">Εκπτωση 31 %</div><div class="a" style="left:16px;top:296px;width:8px;height:1px;background:repeating-linear-gradient(90deg,#808080 0 1px,transparent 1px 2px)"></div><div class="a" style="left:6px;top:292px;width:9px;height:9px;border:1px solid #808080;background:#fff"></div><div class="a" style="left:8px;top:296px;width:5px;height:1px;background:#000"></div><div class="a" style="left:10px;top:294px;width:1px;height:5px;background:#000"></div><svg class="a" style="left:24px;top:289px;" width="19" height="14" viewBox="0 0 19 14" shape-rendering="crispEdges"><rect x="3" y="0" width="7" height="1" fill="#808080"/><rect x="2" y="1" width="1" height="1" fill="#808080"/><rect x="3" y="1" width="7" height="1" fill="#FF0000"/><rect x="10" y="1" width="1" height="1" fill="#808080"/><rect x="2" y="2" width="1" height="1" fill="#808080"/><rect x="3" y="2" width="1" height="1" fill="#FF0000"/><rect x="4" y="2" width="6" height="1" fill="#FFFF00"/><rect x="10" y="2" width="1" height="1" fill="#FF0000"/><rect x="11" y="2" width="1" height="1" fill="#808080"/><rect x="12" y="2" width="6" height="1" fill="#008000"/><rect x="2" y="3" width="1" height="1" fill="#808080"/><rect x="3" y="3" width="2" height="1" fill="#FF0000"/><rect x="5" y="3" width="7" height="1" fill="#FFFF00"/><rect x="12" y="3" width="5" height="1" fill="#FF0000"/><rect x="17" y="3" width="1" height="1" fill="#008000"/><rect x="18" y="3" width="1" height="1" fill="#000000"/><rect x="2" y="4" width="1" height="1" fill="#808080"/><rect x="3" y="4" width="1" height="1" fill="#FF0000"/><rect x="4" y="4" width="13" height="1" fill="#FFFF00"/><rect x="17" y="4" width="1" height="1" fill="#FF0000"/><rect x="18" y="4" width="1" height="1" fill="#000000"/><rect x="2" y="5" width="1" height="1" fill="#808080"/><rect x="3" y="5" width="1" height="1" fill="#FF0000"/><rect x="4" y="5" width="13" height="1" fill="#FFFF00"/><rect x="17" y="5" width="1" height="1" fill="#FF0000"/><rect x="18" y="5" width="1" height="1" fill="#000000"/><rect x="2" y="6" width="1" height="1" fill="#808080"/><rect x="3" y="6" width="1" height="1" fill="#FF0000"/><rect x="4" y="6" width="13" height="1" fill="#FFFF00"/><rect x="17" y="6" width="1" height="1" fill="#FF0000"/><rect x="18" y="6" width="1" height="1" fill="#000000"/><rect x="1" y="7" width="1" height="1" fill="#808080"/><rect x="2" y="7" width="11" height="1" fill="#FF0000"/><rect x="13" y="7" width="1" height="1" fill="#000000"/><rect x="14" y="7" width="3" height="1" fill="#FFFF00"/><rect x="17" y="7" width="1" height="1" fill="#FF0000"/><rect x="18" y="7" width="1" height="1" fill="#000000"/><rect x="1" y="8" width="1" height="1" fill="#808080"/><rect x="2" y="8" width="12" height="1" fill="#FFFF00"/><rect x="14" y="8" width="1" height="1" fill="#808080"/><rect x="15" y="8" width="2" height="1" fill="#FFFF00"/><rect x="17" y="8" width="1" height="1" fill="#FF0000"/><rect x="18" y="8" width="1" height="1" fill="#000000"/><rect x="2" y="9" width="1" height="1" fill="#808080"/><rect x="3" y="9" width="12" height="1" fill="#FFFF00"/><rect x="15" y="9" width="1" height="1" fill="#808080"/><rect x="16" y="9" width="1" height="1" fill="#FFFF00"/><rect x="17" y="9" width="1" height="1" fill="#FF0000"/><rect x="18" y="9" width="1" height="1" fill="#000000"/><rect x="3" y="10" width="1" height="1" fill="#808080"/><rect x="4" y="10" width="12" height="1" fill="#FFFF00"/><rect x="16" y="10" width="1" height="1" fill="#808080"/><rect x="17" y="10" width="1" height="1" fill="#FF0000"/><rect x="18" y="10" width="1" height="1" fill="#000000"/><rect x="4" y="11" width="1" height="1" fill="#808080"/><rect x="5" y="11" width="12" height="1" fill="#FFFF00"/><rect x="17" y="11" width="2" height="1" fill="#000000"/><rect x="5" y="12" width="1" height="1" fill="#808080"/><rect x="6" y="12" width="11" height="1" fill="#FFFF00"/><rect x="17" y="12" width="2" height="1" fill="#000000"/><rect x="5" y="13" width="14" height="1" fill="#000000"/></svg><div class="a t" style="left:50px;top:289px;">Εγκαταστάσεις Ηλεκτρ (7.612.000)</div><div class="a" style="left:16px;top:312px;width:8px;height:1px;background:repeating-linear-gradient(90deg,#808080 0 1px,transparent 1px 2px)"></div><div class="a" style="left:6px;top:308px;width:9px;height:9px;border:1px solid #808080;background:#fff"></div><div class="a" style="left:8px;top:312px;width:5px;height:1px;background:#000"></div><div class="a" style="left:10px;top:310px;width:1px;height:5px;background:#000"></div><svg class="a" style="left:23px;top:304px;" width="22" height="14" viewBox="0 0 22 14" shape-rendering="crispEdges"><rect x="5" y="0" width="12" height="1" fill="#000000"/><rect x="7" y="1" width="1" height="1" fill="#000000"/><rect x="8" y="1" width="6" height="1" fill="#008000"/><rect x="14" y="1" width="1" height="1" fill="#000000"/><rect x="8" y="2" width="6" height="1" fill="#000000"/><rect x="6" y="3" width="5" height="1" fill="#000000"/><rect x="11" y="3" width="1" height="1" fill="#FFFF00"/><rect x="12" y="3" width="1" height="1" fill="#000000"/><rect x="13" y="3" width="1" height="1" fill="#FFFF00"/><rect x="14" y="3" width="6" height="1" fill="#000000"/><rect x="3" y="4" width="2" height="1" fill="#000000"/><rect x="5" y="4" width="5" height="1" fill="#008000"/><rect x="10" y="4" width="1" height="1" fill="#FFFF00"/><rect x="11" y="4" width="1" height="1" fill="#008000"/><rect x="12" y="4" width="1" height="1" fill="#FFFF00"/><rect x="13" y="4" width="1" height="1" fill="#00FF00"/><rect x="14" y="4" width="3" height="1" fill="#008000"/><rect x="17" y="4" width="3" height="1" fill="#000000"/><rect x="2" y="5" width="1" height="1" fill="#000000"/><rect x="3" y="5" width="6" height="1" fill="#008000"/><rect x="9" y="5" width="1" height="1" fill="#00FF00"/><rect x="10" y="5" width="1" height="1" fill="#FFFF00"/><rect x="11" y="5" width="1" height="1" fill="#008000"/><rect x="12" y="5" width="1" height="1" fill="#FFFF00"/><rect x="13" y="5" width="1" height="1" fill="#008000"/><rect x="14" y="5" width="1" height="1" fill="#00FF00"/><rect x="15" y="5" width="4" height="1" fill="#008000"/><rect x="19" y="5" width="1" height="1" fill="#000000"/><rect x="1" y="6" width="1" height="1" fill="#000000"/><rect x="2" y="6" width="7" height="1" fill="#008000"/><rect x="9" y="6" width="1" height="1" fill="#00FF00"/><rect x="10" y="6" width="1" height="1" fill="#FFFF00"/><rect x="11" y="6" width="1" height="1" fill="#008000"/><rect x="12" y="6" width="1" height="1" fill="#FFFF00"/><rect x="13" y="6" width="1" height="1" fill="#008000"/><rect x="14" y="6" width="1" height="1" fill="#00FF00"/><rect x="15" y="6" width="5" height="1" fill="#008000"/><rect x="20" y="6" width="1" height="1" fill="#000000"/><rect x="1" y="7" width="1" height="1" fill="#000000"/><rect x="2" y="7" width="7" height="1" fill="#008000"/><rect x="9" y="7" width="1" height="1" fill="#00FF00"/><rect x="10" y="7" width="1" height="1" fill="#FFFF00"/><rect x="11" y="7" width="1" height="1" fill="#008000"/><rect x="12" y="7" width="1" height="1" fill="#FFFF00"/><rect x="13" y="7" width="1" height="1" fill="#00FF00"/><rect x="14" y="7" width="6" height="1" fill="#008000"/><rect x="20" y="7" width="1" height="1" fill="#000000"/><rect x="0" y="8" width="1" height="1" fill="#000000"/><rect x="1" y="8" width="8" height="1" fill="#008000"/><rect x="9" y="8" width="1" height="1" fill="#00FF00"/><rect x="10" y="8" width="1" height="1" fill="#FFFF00"/><rect x="11" y="8" width="1" height="1" fill="#008000"/><rect x="12" y="8" width="1" height="1" fill="#FFFF00"/><rect x="13" y="8" width="8" height="1" fill="#008000"/><rect x="21" y="8" width="1" height="1" fill="#000000"/><rect x="0" y="9" width="1" height="1" fill="#000000"/><rect x="1" y="9" width="9" height="1" fill="#008000"/><rect x="10" y="9" width="1" height="1" fill="#FFFF00"/><rect x="11" y="9" width="1" height="1" fill="#008000"/><rect x="12" y="9" width="1" height="1" fill="#FFFF00"/><rect x="13" y="9" width="1" height="1" fill="#00FF00"/><rect x="14" y="9" width="7" height="1" fill="#008000"/><rect x="21" y="9" width="1" height="1" fill="#000000"/><rect x="0" y="10" width="1" height="1" fill="#000000"/><rect x="1" y="10" width="9" height="1" fill="#008000"/><rect x="10" y="10" width="1" height="1" fill="#FFFF00"/><rect x="11" y="10" width="1" height="1" fill="#008000"/><rect x="12" y="10" width="1" height="1" fill="#FFFF00"/><rect x="13" y="10" width="1" height="1" fill="#008000"/><rect x="14" y="10" width="1" height="1" fill="#00FF00"/><rect x="15" y="10" width="6" height="1" fill="#008000"/><rect x="21" y="10" width="1" height="1" fill="#000000"/><rect x="1" y="11" width="1" height="1" fill="#000000"/><rect x="2" y="11" width="7" height="1" fill="#008000"/><rect x="9" y="11" width="1" height="1" fill="#00FF00"/><rect x="10" y="11" width="1" height="1" fill="#FFFF00"/><rect x="11" y="11" width="1" height="1" fill="#008000"/><rect x="12" y="11" width="1" height="1" fill="#FFFF00"/><rect x="13" y="11" width="1" height="1" fill="#00FF00"/><rect x="14" y="11" width="6" height="1" fill="#008000"/><rect x="20" y="11" width="1" height="1" fill="#000000"/><rect x="2" y="12" width="2" height="1" fill="#000000"/><rect x="4" y="12" width="6" height="1" fill="#008000"/><rect x="10" y="12" width="1" height="1" fill="#FFFF00"/><rect x="11" y="12" width="1" height="1" fill="#008000"/><rect x="12" y="12" width="1" height="1" fill="#FFFF00"/><rect x="13" y="12" width="6" height="1" fill="#008000"/><rect x="19" y="12" width="2" height="1" fill="#000000"/><rect x="4" y="13" width="16" height="1" fill="#000000"/></svg><div class="a t" style="left:50px;top:305px;">Οφελος 28 %</div><div class="a" style="left:16px;top:328px;width:8px;height:1px;background:repeating-linear-gradient(90deg,#808080 0 1px,transparent 1px 2px)"></div><div class="a" style="left:6px;top:324px;width:9px;height:9px;border:1px solid #808080;background:#fff"></div><div class="a" style="left:8px;top:328px;width:5px;height:1px;background:#000"></div><div class="a" style="left:10px;top:326px;width:1px;height:5px;background:#000"></div><svg class="a" style="left:23px;top:320px;" width="22" height="14" viewBox="0 0 22 14" shape-rendering="crispEdges"><rect x="5" y="0" width="12" height="1" fill="#000000"/><rect x="7" y="1" width="1" height="1" fill="#000000"/><rect x="8" y="1" width="6" height="1" fill="#008000"/><rect x="14" y="1" width="1" height="1" fill="#000000"/><rect x="8" y="2" width="6" height="1" fill="#000000"/><rect x="6" y="3" width="5" height="1" fill="#000000"/><rect x="11" y="3" width="1" height="1" fill="#FFFF00"/><rect x="12" y="3" width="1" height="1" fill="#000000"/><rect x="13" y="3" width="1" height="1" fill="#FFFF00"/><rect x="14" y="3" width="6" height="1" fill="#000000"/><rect x="3" y="4" width="2" height="1" fill="#000000"/><rect x="5" y="4" width="5" height="1" fill="#008000"/><rect x="10" y="4" width="1" height="1" fill="#FFFF00"/><rect x="11" y="4" width="1" height="1" fill="#008000"/><rect x="12" y="4" width="1" height="1" fill="#FFFF00"/><rect x="13" y="4" width="1" height="1" fill="#00FF00"/><rect x="14" y="4" width="3" height="1" fill="#008000"/><rect x="17" y="4" width="3" height="1" fill="#000000"/><rect x="2" y="5" width="1" height="1" fill="#000000"/><rect x="3" y="5" width="6" height="1" fill="#008000"/><rect x="9" y="5" width="1" height="1" fill="#00FF00"/><rect x="10" y="5" width="1" height="1" fill="#FFFF00"/><rect x="11" y="5" width="1" height="1" fill="#008000"/><rect x="12" y="5" width="1" height="1" fill="#FFFF00"/><rect x="13" y="5" width="1" height="1" fill="#008000"/><rect x="14" y="5" width="1" height="1" fill="#00FF00"/><rect x="15" y="5" width="4" height="1" fill="#008000"/><rect x="19" y="5" width="1" height="1" fill="#000000"/><rect x="1" y="6" width="1" height="1" fill="#000000"/><rect x="2" y="6" width="7" height="1" fill="#008000"/><rect x="9" y="6" width="1" height="1" fill="#00FF00"/><rect x="10" y="6" width="1" height="1" fill="#FFFF00"/><rect x="11" y="6" width="1" height="1" fill="#008000"/><rect x="12" y="6" width="1" height="1" fill="#FFFF00"/><rect x="13" y="6" width="1" height="1" fill="#008000"/><rect x="14" y="6" width="1" height="1" fill="#00FF00"/><rect x="15" y="6" width="5" height="1" fill="#008000"/><rect x="20" y="6" width="1" height="1" fill="#000000"/><rect x="1" y="7" width="1" height="1" fill="#000000"/><rect x="2" y="7" width="7" height="1" fill="#008000"/><rect x="9" y="7" width="1" height="1" fill="#00FF00"/><rect x="10" y="7" width="1" height="1" fill="#FFFF00"/><rect x="11" y="7" width="1" height="1" fill="#008000"/><rect x="12" y="7" width="1" height="1" fill="#FFFF00"/><rect x="13" y="7" width="1" height="1" fill="#00FF00"/><rect x="14" y="7" width="6" height="1" fill="#008000"/><rect x="20" y="7" width="1" height="1" fill="#000000"/><rect x="0" y="8" width="1" height="1" fill="#000000"/><rect x="1" y="8" width="8" height="1" fill="#008000"/><rect x="9" y="8" width="1" height="1" fill="#00FF00"/><rect x="10" y="8" width="1" height="1" fill="#FFFF00"/><rect x="11" y="8" width="1" height="1" fill="#008000"/><rect x="12" y="8" width="1" height="1" fill="#FFFF00"/><rect x="13" y="8" width="8" height="1" fill="#008000"/><rect x="21" y="8" width="1" height="1" fill="#000000"/><rect x="0" y="9" width="1" height="1" fill="#000000"/><rect x="1" y="9" width="9" height="1" fill="#008000"/><rect x="10" y="9" width="1" height="1" fill="#FFFF00"/><rect x="11" y="9" width="1" height="1" fill="#008000"/><rect x="12" y="9" width="1" height="1" fill="#FFFF00"/><rect x="13" y="9" width="1" height="1" fill="#00FF00"/><rect x="14" y="9" width="7" height="1" fill="#008000"/><rect x="21" y="9" width="1" height="1" fill="#000000"/><rect x="0" y="10" width="1" height="1" fill="#000000"/><rect x="1" y="10" width="9" height="1" fill="#008000"/><rect x="10" y="10" width="1" height="1" fill="#FFFF00"/><rect x="11" y="10" width="1" height="1" fill="#008000"/><rect x="12" y="10" width="1" height="1" fill="#FFFF00"/><rect x="13" y="10" width="1" height="1" fill="#008000"/><rect x="14" y="10" width="1" height="1" fill="#00FF00"/><rect x="15" y="10" width="6" height="1" fill="#008000"/><rect x="21" y="10" width="1" height="1" fill="#000000"/><rect x="1" y="11" width="1" height="1" fill="#000000"/><rect x="2" y="11" width="7" height="1" fill="#008000"/><rect x="9" y="11" width="1" height="1" fill="#00FF00"/><rect x="10" y="11" width="1" height="1" fill="#FFFF00"/><rect x="11" y="11" width="1" height="1" fill="#008000"/><rect x="12" y="11" width="1" height="1" fill="#FFFF00"/><rect x="13" y="11" width="1" height="1" fill="#00FF00"/><rect x="14" y="11" width="6" height="1" fill="#008000"/><rect x="20" y="11" width="1" height="1" fill="#000000"/><rect x="2" y="12" width="2" height="1" fill="#000000"/><rect x="4" y="12" width="6" height="1" fill="#008000"/><rect x="10" y="12" width="1" height="1" fill="#FFFF00"/><rect x="11" y="12" width="1" height="1" fill="#008000"/><rect x="12" y="12" width="1" height="1" fill="#FFFF00"/><rect x="13" y="12" width="6" height="1" fill="#008000"/><rect x="19" y="12" width="2" height="1" fill="#000000"/><rect x="4" y="13" width="16" height="1" fill="#000000"/></svg><div class="a t" style="left:50px;top:321px;">Απρόβλεπτα (4.521.300)</div><div class="a" style="left:16px;top:344px;width:8px;height:1px;background:repeating-linear-gradient(90deg,#808080 0 1px,transparent 1px 2px)"></div><div class="a" style="left:6px;top:340px;width:9px;height:9px;border:1px solid #808080;background:#fff"></div><div class="a" style="left:8px;top:344px;width:5px;height:1px;background:#000"></div><div class="a" style="left:10px;top:342px;width:1px;height:5px;background:#000"></div><svg class="a" style="left:26px;top:337px;" width="17" height="15" viewBox="0 0 17 15" shape-rendering="crispEdges"><rect x="0" y="0" width="6" height="1" fill="#808080"/><rect x="0" y="1" width="1" height="1" fill="#FF0000"/><rect x="1" y="1" width="1" height="1" fill="#FFFF00"/><rect x="2" y="1" width="1" height="1" fill="#FF0000"/><rect x="3" y="1" width="1" height="1" fill="#FFFF00"/><rect x="4" y="1" width="1" height="1" fill="#FF0000"/><rect x="5" y="1" width="1" height="1" fill="#FFFF00"/><rect x="6" y="1" width="10" height="1" fill="#808080"/><rect x="0" y="2" width="1" height="1" fill="#FFFF00"/><rect x="1" y="2" width="1" height="1" fill="#FF0000"/><rect x="2" y="2" width="1" height="1" fill="#FFFF00"/><rect x="3" y="2" width="1" height="1" fill="#FF0000"/><rect x="4" y="2" width="1" height="1" fill="#FFFF00"/><rect x="5" y="2" width="1" height="1" fill="#FF0000"/><rect x="6" y="2" width="1" height="1" fill="#FFFF00"/><rect x="7" y="2" width="1" height="1" fill="#FF0000"/><rect x="8" y="2" width="1" height="1" fill="#FFFF00"/><rect x="9" y="2" width="1" height="1" fill="#FF0000"/><rect x="10" y="2" width="1" height="1" fill="#FFFF00"/><rect x="11" y="2" width="1" height="1" fill="#FF0000"/><rect x="12" y="2" width="1" height="1" fill="#FFFF00"/><rect x="13" y="2" width="1" height="1" fill="#FF0000"/><rect x="14" y="2" width="1" height="1" fill="#FFFF00"/><rect x="15" y="2" width="1" height="1" fill="#FF0000"/><rect x="16" y="2" width="1" height="1" fill="#808080"/><rect x="0" y="3" width="1" height="1" fill="#FF0000"/><rect x="1" y="3" width="1" height="1" fill="#FFFF00"/><rect x="2" y="3" width="1" height="1" fill="#FF0000"/><rect x="3" y="3" width="1" height="1" fill="#FFFF00"/><rect x="4" y="3" width="1" height="1" fill="#FF0000"/><rect x="5" y="3" width="1" height="1" fill="#FFFF00"/><rect x="6" y="3" width="1" height="1" fill="#FF0000"/><rect x="7" y="3" width="1" height="1" fill="#FFFF00"/><rect x="8" y="3" width="1" height="1" fill="#FF0000"/><rect x="9" y="3" width="1" height="1" fill="#FFFF00"/><rect x="10" y="3" width="1" height="1" fill="#FF0000"/><rect x="11" y="3" width="1" height="1" fill="#FFFF00"/><rect x="12" y="3" width="1" height="1" fill="#FF0000"/><rect x="13" y="3" width="1" height="1" fill="#FFFF00"/><rect x="14" y="3" width="1" height="1" fill="#FF0000"/><rect x="15" y="3" width="1" height="1" fill="#FFFF00"/><rect x="16" y="3" width="1" height="1" fill="#808080"/><rect x="0" y="4" width="1" height="1" fill="#FFFF00"/><rect x="1" y="4" width="1" height="1" fill="#FF0000"/><rect x="2" y="4" width="1" height="1" fill="#FFFF00"/><rect x="3" y="4" width="1" height="1" fill="#FF0000"/><rect x="4" y="4" width="1" height="1" fill="#FFFF00"/><rect x="5" y="4" width="1" height="1" fill="#FF0000"/><rect x="6" y="4" width="1" height="1" fill="#FFFF00"/><rect x="7" y="4" width="1" height="1" fill="#FF0000"/><rect x="8" y="4" width="1" height="1" fill="#FFFF00"/><rect x="9" y="4" width="1" height="1" fill="#FF0000"/><rect x="10" y="4" width="1" height="1" fill="#FFFF00"/><rect x="11" y="4" width="1" height="1" fill="#FF0000"/><rect x="12" y="4" width="1" height="1" fill="#FFFF00"/><rect x="13" y="4" width="1" height="1" fill="#FF0000"/><rect x="14" y="4" width="1" height="1" fill="#FFFF00"/><rect x="15" y="4" width="1" height="1" fill="#FF0000"/><rect x="16" y="4" width="1" height="1" fill="#808080"/><rect x="0" y="5" width="1" height="1" fill="#FF0000"/><rect x="1" y="5" width="1" height="1" fill="#FFFF00"/><rect x="2" y="5" width="1" height="1" fill="#FF0000"/><rect x="3" y="5" width="1" height="1" fill="#FFFF00"/><rect x="4" y="5" width="1" height="1" fill="#FF0000"/><rect x="5" y="5" width="1" height="1" fill="#FFFF00"/><rect x="6" y="5" width="1" height="1" fill="#FF0000"/><rect x="7" y="5" width="2" height="1" fill="#FFFF00"/><rect x="9" y="5" width="5" height="1" fill="#000000"/><rect x="14" y="5" width="1" height="1" fill="#FF0000"/><rect x="15" y="5" width="1" height="1" fill="#FFFF00"/><rect x="16" y="5" width="1" height="1" fill="#808080"/><rect x="0" y="6" width="1" height="1" fill="#FFFF00"/><rect x="1" y="6" width="1" height="1" fill="#FF0000"/><rect x="2" y="6" width="1" height="1" fill="#FFFF00"/><rect x="3" y="6" width="1" height="1" fill="#FF0000"/><rect x="4" y="6" width="1" height="1" fill="#FFFF00"/><rect x="5" y="6" width="1" height="1" fill="#FF0000"/><rect x="6" y="6" width="1" height="1" fill="#FFFF00"/><rect x="7" y="6" width="1" height="1" fill="#FF0000"/><rect x="8" y="6" width="1" height="1" fill="#FFFF00"/><rect x="9" y="6" width="1" height="1" fill="#000000"/><rect x="10" y="6" width="3" height="1" fill="#00FF00"/><rect x="13" y="6" width="1" height="1" fill="#000000"/><rect x="14" y="6" width="1" height="1" fill="#FFFF00"/><rect x="15" y="6" width="1" height="1" fill="#FF0000"/><rect x="16" y="6" width="1" height="1" fill="#808080"/><rect x="0" y="7" width="1" height="1" fill="#FF0000"/><rect x="1" y="7" width="1" height="1" fill="#FFFF00"/><rect x="2" y="7" width="1" height="1" fill="#FF0000"/><rect x="3" y="7" width="1" height="1" fill="#FFFF00"/><rect x="4" y="7" width="1" height="1" fill="#FF0000"/><rect x="5" y="7" width="1" height="1" fill="#FFFF00"/><rect x="6" y="7" width="1" height="1" fill="#FF0000"/><rect x="7" y="7" width="2" height="1" fill="#FFFF00"/><rect x="9" y="7" width="1" height="1" fill="#000000"/><rect x="10" y="7" width="3" height="1" fill="#00FF00"/><rect x="13" y="7" width="1" height="1" fill="#000000"/><rect x="14" y="7" width="1" height="1" fill="#FF0000"/><rect x="15" y="7" width="1" height="1" fill="#FFFF00"/><rect x="16" y="7" width="1" height="1" fill="#808080"/><rect x="0" y="8" width="1" height="1" fill="#FFFF00"/><rect x="1" y="8" width="1" height="1" fill="#FF0000"/><rect x="2" y="8" width="1" height="1" fill="#FFFF00"/><rect x="3" y="8" width="1" height="1" fill="#FF0000"/><rect x="4" y="8" width="1" height="1" fill="#FFFF00"/><rect x="5" y="8" width="5" height="1" fill="#000000"/><rect x="10" y="8" width="3" height="1" fill="#00FF00"/><rect x="13" y="8" width="4" height="1" fill="#000000"/><rect x="0" y="9" width="1" height="1" fill="#FF0000"/><rect x="1" y="9" width="1" height="1" fill="#FFFF00"/><rect x="2" y="9" width="1" height="1" fill="#FF0000"/><rect x="3" y="9" width="2" height="1" fill="#FFFF00"/><rect x="5" y="9" width="1" height="1" fill="#000000"/><rect x="6" y="9" width="10" height="1" fill="#00FF00"/><rect x="16" y="9" width="1" height="1" fill="#000000"/><rect x="0" y="10" width="1" height="1" fill="#FFFF00"/><rect x="1" y="10" width="1" height="1" fill="#FF0000"/><rect x="2" y="10" width="1" height="1" fill="#FFFF00"/><rect x="3" y="10" width="1" height="1" fill="#FF0000"/><rect x="4" y="10" width="1" height="1" fill="#FFFF00"/><rect x="5" y="10" width="1" height="1" fill="#000000"/><rect x="6" y="10" width="10" height="1" fill="#00FF00"/><rect x="16" y="10" width="1" height="1" fill="#000000"/><rect x="0" y="11" width="1" height="1" fill="#FF0000"/><rect x="1" y="11" width="1" height="1" fill="#FFFF00"/><rect x="2" y="11" width="1" height="1" fill="#FF0000"/><rect x="3" y="11" width="2" height="1" fill="#FFFF00"/><rect x="5" y="11" width="5" height="1" fill="#000000"/><rect x="10" y="11" width="3" height="1" fill="#00FF00"/><rect x="13" y="11" width="4" height="1" fill="#000000"/><rect x="0" y="12" width="1" height="1" fill="#FFFF00"/><rect x="1" y="12" width="1" height="1" fill="#FF0000"/><rect x="2" y="12" width="1" height="1" fill="#FFFF00"/><rect x="3" y="12" width="1" height="1" fill="#FF0000"/><rect x="4" y="12" width="1" height="1" fill="#FFFF00"/><rect x="5" y="12" width="1" height="1" fill="#FF0000"/><rect x="6" y="12" width="1" height="1" fill="#FFFF00"/><rect x="7" y="12" width="1" height="1" fill="#FF0000"/><rect x="8" y="12" width="1" height="1" fill="#FFFF00"/><rect x="9" y="12" width="1" height="1" fill="#000000"/><rect x="10" y="12" width="3" height="1" fill="#00FF00"/><rect x="13" y="12" width="1" height="1" fill="#000000"/><rect x="14" y="12" width="1" height="1" fill="#FFFF00"/><rect x="15" y="12" width="1" height="1" fill="#FF0000"/><rect x="16" y="12" width="1" height="1" fill="#808080"/><rect x="0" y="13" width="1" height="1" fill="#FF0000"/><rect x="1" y="13" width="1" height="1" fill="#FFFF00"/><rect x="2" y="13" width="1" height="1" fill="#FF0000"/><rect x="3" y="13" width="1" height="1" fill="#FFFF00"/><rect x="4" y="13" width="1" height="1" fill="#FF0000"/><rect x="5" y="13" width="1" height="1" fill="#FFFF00"/><rect x="6" y="13" width="1" height="1" fill="#FF0000"/><rect x="7" y="13" width="2" height="1" fill="#FFFF00"/><rect x="9" y="13" width="1" height="1" fill="#000000"/><rect x="10" y="13" width="3" height="1" fill="#00FF00"/><rect x="13" y="13" width="1" height="1" fill="#000000"/><rect x="14" y="13" width="1" height="1" fill="#FF0000"/><rect x="15" y="13" width="1" height="1" fill="#FFFF00"/><rect x="16" y="13" width="1" height="1" fill="#808080"/><rect x="0" y="14" width="8" height="1" fill="#808080"/><rect x="8" y="14" width="5" height="1" fill="#000000"/><rect x="13" y="14" width="4" height="1" fill="#808080"/></svg><div class="a t" style="left:50px;top:337px;">1η Συμπληρωματική σύ (1ου)</div><div class="a" style="left:16px;top:360px;width:8px;height:1px;background:repeating-linear-gradient(90deg,#808080 0 1px,transparent 1px 2px)"></div><div class="a" style="left:6px;top:356px;width:9px;height:9px;border:1px solid #808080;background:#fff"></div><div class="a" style="left:8px;top:360px;width:5px;height:1px;background:#000"></div><div class="a" style="left:10px;top:358px;width:1px;height:5px;background:#000"></div><svg class="a" style="left:23px;top:352px;" width="22" height="14" viewBox="0 0 22 14" shape-rendering="crispEdges"><rect x="5" y="0" width="12" height="1" fill="#000000"/><rect x="7" y="1" width="1" height="1" fill="#000000"/><rect x="8" y="1" width="6" height="1" fill="#008000"/><rect x="14" y="1" width="1" height="1" fill="#000000"/><rect x="8" y="2" width="6" height="1" fill="#000000"/><rect x="6" y="3" width="5" height="1" fill="#000000"/><rect x="11" y="3" width="1" height="1" fill="#FFFF00"/><rect x="12" y="3" width="1" height="1" fill="#000000"/><rect x="13" y="3" width="1" height="1" fill="#FFFF00"/><rect x="14" y="3" width="6" height="1" fill="#000000"/><rect x="3" y="4" width="2" height="1" fill="#000000"/><rect x="5" y="4" width="5" height="1" fill="#008000"/><rect x="10" y="4" width="1" height="1" fill="#FFFF00"/><rect x="11" y="4" width="1" height="1" fill="#008000"/><rect x="12" y="4" width="1" height="1" fill="#FFFF00"/><rect x="13" y="4" width="1" height="1" fill="#00FF00"/><rect x="14" y="4" width="3" height="1" fill="#008000"/><rect x="17" y="4" width="3" height="1" fill="#000000"/><rect x="2" y="5" width="1" height="1" fill="#000000"/><rect x="3" y="5" width="6" height="1" fill="#008000"/><rect x="9" y="5" width="1" height="1" fill="#00FF00"/><rect x="10" y="5" width="1" height="1" fill="#FFFF00"/><rect x="11" y="5" width="1" height="1" fill="#008000"/><rect x="12" y="5" width="1" height="1" fill="#FFFF00"/><rect x="13" y="5" width="1" height="1" fill="#008000"/><rect x="14" y="5" width="1" height="1" fill="#00FF00"/><rect x="15" y="5" width="4" height="1" fill="#008000"/><rect x="19" y="5" width="1" height="1" fill="#000000"/><rect x="1" y="6" width="1" height="1" fill="#000000"/><rect x="2" y="6" width="7" height="1" fill="#008000"/><rect x="9" y="6" width="1" height="1" fill="#00FF00"/><rect x="10" y="6" width="1" height="1" fill="#FFFF00"/><rect x="11" y="6" width="1" height="1" fill="#008000"/><rect x="12" y="6" width="1" height="1" fill="#FFFF00"/><rect x="13" y="6" width="1" height="1" fill="#008000"/><rect x="14" y="6" width="1" height="1" fill="#00FF00"/><rect x="15" y="6" width="5" height="1" fill="#008000"/><rect x="20" y="6" width="1" height="1" fill="#000000"/><rect x="1" y="7" width="1" height="1" fill="#000000"/><rect x="2" y="7" width="7" height="1" fill="#008000"/><rect x="9" y="7" width="1" height="1" fill="#00FF00"/><rect x="10" y="7" width="1" height="1" fill="#FFFF00"/><rect x="11" y="7" width="1" height="1" fill="#008000"/><rect x="12" y="7" width="1" height="1" fill="#FFFF00"/><rect x="13" y="7" width="1" height="1" fill="#00FF00"/><rect x="14" y="7" width="6" height="1" fill="#008000"/><rect x="20" y="7" width="1" height="1" fill="#000000"/><rect x="0" y="8" width="1" height="1" fill="#000000"/><rect x="1" y="8" width="8" height="1" fill="#008000"/><rect x="9" y="8" width="1" height="1" fill="#00FF00"/><rect x="10" y="8" width="1" height="1" fill="#FFFF00"/><rect x="11" y="8" width="1" height="1" fill="#008000"/><rect x="12" y="8" width="1" height="1" fill="#FFFF00"/><rect x="13" y="8" width="8" height="1" fill="#008000"/><rect x="21" y="8" width="1" height="1" fill="#000000"/><rect x="0" y="9" width="1" height="1" fill="#000000"/><rect x="1" y="9" width="9" height="1" fill="#008000"/><rect x="10" y="9" width="1" height="1" fill="#FFFF00"/><rect x="11" y="9" width="1" height="1" fill="#008000"/><rect x="12" y="9" width="1" height="1" fill="#FFFF00"/><rect x="13" y="9" width="1" height="1" fill="#00FF00"/><rect x="14" y="9" width="7" height="1" fill="#008000"/><rect x="21" y="9" width="1" height="1" fill="#000000"/><rect x="0" y="10" width="1" height="1" fill="#000000"/><rect x="1" y="10" width="9" height="1" fill="#008000"/><rect x="10" y="10" width="1" height="1" fill="#FFFF00"/><rect x="11" y="10" width="1" height="1" fill="#008000"/><rect x="12" y="10" width="1" height="1" fill="#FFFF00"/><rect x="13" y="10" width="1" height="1" fill="#008000"/><rect x="14" y="10" width="1" height="1" fill="#00FF00"/><rect x="15" y="10" width="6" height="1" fill="#008000"/><rect x="21" y="10" width="1" height="1" fill="#000000"/><rect x="1" y="11" width="1" height="1" fill="#000000"/><rect x="2" y="11" width="7" height="1" fill="#008000"/><rect x="9" y="11" width="1" height="1" fill="#00FF00"/><rect x="10" y="11" width="1" height="1" fill="#FFFF00"/><rect x="11" y="11" width="1" height="1" fill="#008000"/><rect x="12" y="11" width="1" height="1" fill="#FFFF00"/><rect x="13" y="11" width="1" height="1" fill="#00FF00"/><rect x="14" y="11" width="6" height="1" fill="#008000"/><rect x="20" y="11" width="1" height="1" fill="#000000"/><rect x="2" y="12" width="2" height="1" fill="#000000"/><rect x="4" y="12" width="6" height="1" fill="#008000"/><rect x="10" y="12" width="1" height="1" fill="#FFFF00"/><rect x="11" y="12" width="1" height="1" fill="#008000"/><rect x="12" y="12" width="1" height="1" fill="#FFFF00"/><rect x="13" y="12" width="6" height="1" fill="#008000"/><rect x="19" y="12" width="2" height="1" fill="#000000"/><rect x="4" y="13" width="16" height="1" fill="#000000"/></svg><div class="a t" style="left:50px;top:353px;">Φ.Π.Α. 13 %</div></div>
<div class="a dither" style="left:14px;top:487px;width:187px;height:16px;"></div>
<div class="a raised" style="left:14px;top:487px;width:16px;height:16px;background:#D4D0C8"><svg class="a" style="left:5px;top:4px;" width="4" height="7" viewBox="0 0 4 7" shape-rendering="crispEdges"><path d="M4 0v7l-4-3.5z" fill="#000" shape-rendering="geometricPrecision"/></svg></div>
<div class="a raised" style="left:30px;top:487px;width:128px;height:16px;background:#D4D0C8"></div>
<div class="a raised" style="left:185px;top:487px;width:16px;height:16px;background:#D4D0C8"><svg class="a" style="left:6px;top:4px;" width="4" height="7" viewBox="0 0 4 7" shape-rendering="crispEdges"><path d="M0 0v7l4-3.5z" fill="#000" shape-rendering="geometricPrecision"/></svg></div>
<div class="a sunken" style="left:207px;top:110px;width:581px;height:346px;background:#fff"></div>
<div class="a " style="left:209px;top:112px;width:561px;height:31px;background:#000"></div>
<div class="a thin" style="left:209px;top:112px;width:11px;height:30px;background:#D4D0C8"></div>
<div class="a thin" style="left:221px;top:112px;width:35px;height:30px;background:#D4D0C8"></div>
<div class="a t" style="left:223px;top:114px;">Τύπος</div>
<div class="a thin" style="left:257px;top:112px;width:77px;height:30px;background:#D4D0C8"></div>
<div class="a t" style="left:259px;top:114px;">Αριθμός
Τιμολογίου</div>
<div class="a thin" style="left:335px;top:112px;width:103px;height:30px;background:#D4D0C8"></div>
<div class="a t" style="left:337px;top:114px;">Περιγραφή</div>
<div class="a thin" style="left:439px;top:112px;width:49px;height:30px;background:#D4D0C8"></div>
<div class="a t" style="left:441px;top:114px;">Μ/Μ</div>
<div class="a thin" style="left:489px;top:112px;width:64px;height:30px;background:#D4D0C8"></div>
<div class="a t" style="left:491px;top:114px;">Ποσότητα</div>
<div class="a thin" style="left:554px;top:112px;width:84px;height:30px;background:#D4D0C8"></div>
<div class="a t" style="left:556px;top:114px;">Συμβατική
Τιμή</div>
<div class="a thinl" style="left:639px;top:112px;width:131px;height:30px;background:#D4D0C8"></div>
<div class="a t" style="left:641px;top:114px;">Αναθεωρείται με</div>
<div class="a " style="left:209px;top:143px;width:48px;height:288px;background:#000"></div>
<div class="a " style="left:257px;top:143px;width:513px;height:288px;background:#C0C0C0"></div>
<svg width="0" height="0" style="position:absolute"><defs><g id="pg"><rect x="0" y="0" width="8" height="1" fill="#000000"/><rect x="0" y="1" width="1" height="1" fill="#000000"/><rect x="1" y="1" width="6" height="1" fill="#FFFFFF"/><rect x="7" y="1" width="1" height="1" fill="#808080"/><rect x="8" y="1" width="1" height="1" fill="#000000"/><rect x="0" y="2" width="1" height="1" fill="#000000"/><rect x="1" y="2" width="7" height="1" fill="#FFFFFF"/><rect x="8" y="2" width="1" height="1" fill="#808080"/><rect x="9" y="2" width="1" height="1" fill="#000000"/><rect x="0" y="3" width="1" height="1" fill="#000000"/><rect x="1" y="3" width="2" height="1" fill="#FFFFFF"/><rect x="3" y="3" width="2" height="1" fill="#000000"/><rect x="5" y="3" width="4" height="1" fill="#FFFFFF"/><rect x="9" y="3" width="1" height="1" fill="#000000"/><rect x="0" y="4" width="1" height="1" fill="#000000"/><rect x="1" y="4" width="8" height="1" fill="#FFFFFF"/><rect x="9" y="4" width="1" height="1" fill="#000000"/><rect x="0" y="5" width="1" height="1" fill="#000000"/><rect x="1" y="5" width="2" height="1" fill="#FFFFFF"/><rect x="3" y="5" width="3" height="1" fill="#000000"/><rect x="6" y="5" width="3" height="1" fill="#FFFFFF"/><rect x="9" y="5" width="1" height="1" fill="#000000"/><rect x="0" y="6" width="1" height="1" fill="#000000"/><rect x="1" y="6" width="8" height="1" fill="#FFFFFF"/><rect x="9" y="6" width="1" height="1" fill="#000000"/><rect x="0" y="7" width="1" height="1" fill="#000000"/><rect x="1" y="7" width="2" height="1" fill="#FFFFFF"/><rect x="3" y="7" width="5" height="1" fill="#000000"/><rect x="8" y="7" width="1" height="1" fill="#FFFFFF"/><rect x="9" y="7" width="1" height="1" fill="#000000"/><rect x="0" y="8" width="1" height="1" fill="#000000"/><rect x="1" y="8" width="8" height="1" fill="#FFFFFF"/><rect x="9" y="8" width="1" height="1" fill="#000000"/><rect x="0" y="9" width="1" height="1" fill="#000000"/><rect x="1" y="9" width="2" height="1" fill="#FFFFFF"/><rect x="3" y="9" width="5" height="1" fill="#000000"/><rect x="8" y="9" width="1" height="1" fill="#FFFFFF"/><rect x="9" y="9" width="1" height="1" fill="#000000"/><rect x="0" y="10" width="1" height="1" fill="#000000"/><rect x="1" y="10" width="8" height="1" fill="#FFFFFF"/><rect x="9" y="10" width="1" height="1" fill="#000000"/><rect x="0" y="11" width="1" height="1" fill="#000000"/><rect x="1" y="11" width="2" height="1" fill="#FFFFFF"/><rect x="3" y="11" width="5" height="1" fill="#000000"/><rect x="8" y="11" width="1" height="1" fill="#FFFFFF"/><rect x="9" y="11" width="1" height="1" fill="#000000"/><rect x="0" y="12" width="1" height="1" fill="#000000"/><rect x="1" y="12" width="8" height="1" fill="#FFFFFF"/><rect x="9" y="12" width="1" height="1" fill="#000000"/><rect x="0" y="13" width="10" height="1" fill="#000000"/></g></defs></svg>
<div class="a thin" style="left:209px;top:143px;width:11px;height:17px;background:#D4D0C8"></div>
<div class="a thin" style="left:221px;top:143px;width:35px;height:17px;background:#D4D0C8"></div>
<svg class="a" style="left:233px;top:145px" width="10" height="14" shape-rendering="crispEdges"><use href="#pg"/></svg>
<div class="a cell" style="left:257px;top:143px;width:77px;height:17px;background:#00FFFF;">1.1</div>
<div class="a cell" style="left:335px;top:143px;width:103px;height:17px;background:#00FFFF;letter-spacing:0.25px;">Γενικαί εκσκαφαί γαιών</div>
<div class="a cell" style="left:439px;top:143px;width:49px;height:17px;background:#00FFFF;">M3</div>
<div class="a cell r" style="left:489px;top:143px;width:64px;height:17px;background:#00FFFF;">500</div>
<div class="a cell r" style="left:554px;top:143px;width:84px;height:17px;background:#00FFFF;">986</div>
<div class="a cell" style="left:639px;top:143px;width:131px;height:17px;background:#fff;letter-spacing:-0.35px;">OIK 2109</div>
<div class="a thin" style="left:209px;top:161px;width:11px;height:17px;background:#D4D0C8"></div>
<div class="a thin" style="left:221px;top:161px;width:35px;height:17px;background:#D4D0C8"></div>
<svg class="a" style="left:233px;top:163px" width="10" height="14" shape-rendering="crispEdges"><use href="#pg"/></svg>
<div class="a cell" style="left:257px;top:161px;width:77px;height:17px;background:#00FFFF;">1.2</div>
<div class="a cell" style="left:335px;top:161px;width:103px;height:17px;background:#00FFFF;letter-spacing:0.25px;">Γενικαί εκσκαφαί ημιβραχωδών</div>
<div class="a cell" style="left:439px;top:161px;width:49px;height:17px;background:#00FFFF;">M3</div>
<div class="a cell r" style="left:489px;top:161px;width:64px;height:17px;background:#00FFFF;">220</div>
<div class="a cell r" style="left:554px;top:161px;width:84px;height:17px;background:#00FFFF;">1.510</div>
<div class="a cell" style="left:639px;top:161px;width:131px;height:17px;background:#fff;letter-spacing:-0.35px;">OIK 2110</div>
<div class="a thin" style="left:209px;top:179px;width:11px;height:17px;background:#D4D0C8"></div>
<div class="a thin" style="left:221px;top:179px;width:35px;height:17px;background:#D4D0C8"></div>
<svg class="a" style="left:233px;top:181px" width="10" height="14" shape-rendering="crispEdges"><use href="#pg"/></svg>
<svg class="a" style="left:212px;top:182px;" width="6" height="11" viewBox="0 0 6 11" shape-rendering="crispEdges"><path d="M0 0v11l6-5.5z" fill="#000" shape-rendering="geometricPrecision"/></svg>
<div class="a cell" style="left:257px;top:179px;width:77px;height:17px;background:#00FFFF;">1.3</div>
<div class="a cell" style="left:335px;top:179px;width:103px;height:17px;background:#D4D0C8;letter-spacing:0.25px;">Σκυρόδεμα κατηγορίας</div>
<div class="a cell" style="left:439px;top:179px;width:49px;height:17px;background:#00FFFF;">M3</div>
<div class="a cell r" style="left:489px;top:179px;width:64px;height:17px;background:#00FFFF;">3</div>
<div class="a cell r" style="left:554px;top:179px;width:84px;height:17px;background:#00FFFF;">38.128</div>
<div class="a cell" style="left:639px;top:179px;width:131px;height:17px;background:#fff;letter-spacing:-0.35px;">OIK 3213</div>
<div class="a thin" style="left:209px;top:197px;width:11px;height:17px;background:#D4D0C8"></div>
<div class="a thin" style="left:221px;top:197px;width:35px;height:17px;background:#D4D0C8"></div>
<svg class="a" style="left:233px;top:199px" width="10" height="14" shape-rendering="crispEdges"><use href="#pg"/></svg>
<div class="a cell" style="left:257px;top:197px;width:77px;height:17px;background:#00FFFF;">1.4</div>
<div class="a cell" style="left:335px;top:197px;width:103px;height:17px;background:#00FFFF;letter-spacing:0.25px;">Φορτοεκφόρτωσις ξυλοτύπων</div>
<div class="a cell" style="left:439px;top:197px;width:49px;height:17px;background:#00FFFF;">M3</div>
<div class="a cell r" style="left:489px;top:197px;width:64px;height:17px;background:#00FFFF;">720</div>
<div class="a cell r" style="left:554px;top:197px;width:84px;height:17px;background:#00FFFF;">832</div>
<div class="a cell" style="left:639px;top:197px;width:131px;height:17px;background:#fff;letter-spacing:-0.35px;">OIK 2171</div>
<div class="a thin" style="left:209px;top:215px;width:11px;height:17px;background:#D4D0C8"></div>
<div class="a thin" style="left:221px;top:215px;width:35px;height:17px;background:#D4D0C8"></div>
<svg class="a" style="left:233px;top:217px" width="10" height="14" shape-rendering="crispEdges"><use href="#pg"/></svg>
<div class="a cell" style="left:257px;top:215px;width:77px;height:17px;background:#00FFFF;">1.5</div>
<div class="a cell" style="left:335px;top:215px;width:103px;height:17px;background:#00FFFF;letter-spacing:0.25px;">Κατασκευή στερεούμενου</div>
<div class="a cell" style="left:439px;top:215px;width:49px;height:17px;background:#00FFFF;"></div>
<div class="a cell r" style="left:489px;top:215px;width:64px;height:17px;background:#00FFFF;">152</div>
<div class="a cell r" style="left:554px;top:215px;width:84px;height:17px;background:#00FFFF;">8.880</div>
<div class="a cell" style="left:639px;top:215px;width:131px;height:17px;background:#fff;letter-spacing:-0.35px;">OIK 3213</div>
<div class="a thin" style="left:209px;top:233px;width:11px;height:17px;background:#D4D0C8"></div>
<div class="a thin" style="left:221px;top:233px;width:35px;height:17px;background:#D4D0C8"></div>
<svg class="a" style="left:233px;top:235px" width="10" height="14" shape-rendering="crispEdges"><use href="#pg"/></svg>
<div class="a cell" style="left:257px;top:233px;width:77px;height:17px;background:#00FFFF;">1.6</div>
<div class="a cell" style="left:335px;top:233px;width:103px;height:17px;background:#00FFFF;letter-spacing:0.25px;">Περίφραξη μίνι γηπέδου</div>
<div class="a cell" style="left:439px;top:233px;width:49px;height:17px;background:#00FFFF;">M2</div>
<div class="a cell r" style="left:489px;top:233px;width:64px;height:17px;background:#00FFFF;">640</div>
<div class="a cell r" style="left:554px;top:233px;width:84px;height:17px;background:#00FFFF;">6.293</div>
<div class="a cell" style="left:639px;top:233px;width:131px;height:17px;background:#fff;letter-spacing:-0.35px;">OIK 6448</div>
<div class="a thin" style="left:209px;top:251px;width:11px;height:17px;background:#D4D0C8"></div>
<div class="a thin" style="left:221px;top:251px;width:35px;height:17px;background:#D4D0C8"></div>
<svg class="a" style="left:233px;top:253px" width="10" height="14" shape-rendering="crispEdges"><use href="#pg"/></svg>
<div class="a cell" style="left:257px;top:251px;width:77px;height:17px;background:#00FFFF;">1.7</div>
<div class="a cell" style="left:335px;top:251px;width:103px;height:17px;background:#00FFFF;letter-spacing:0.25px;">Κατασκευή τάπητα</div>
<div class="a cell" style="left:439px;top:251px;width:49px;height:17px;background:#00FFFF;">M2</div>
<div class="a cell r" style="left:489px;top:251px;width:64px;height:17px;background:#00FFFF;">1.420</div>
<div class="a cell r" style="left:554px;top:251px;width:84px;height:17px;background:#00FFFF;">4.017</div>
<div class="a cell" style="left:639px;top:251px;width:131px;height:17px;background:#fff;letter-spacing:-0.35px;">OIK 7912</div>
<div class="a thin" style="left:209px;top:269px;width:11px;height:17px;background:#D4D0C8"></div>
<div class="a thin" style="left:221px;top:269px;width:35px;height:17px;background:#D4D0C8"></div>
<svg class="a" style="left:233px;top:271px" width="10" height="14" shape-rendering="crispEdges"><use href="#pg"/></svg>
<div class="a cell" style="left:257px;top:269px;width:77px;height:17px;background:#00FFFF;">1.8</div>
<div class="a cell" style="left:335px;top:269px;width:103px;height:17px;background:#00FFFF;letter-spacing:0.25px;">Καθαρά μεταφορά των</div>
<div class="a cell" style="left:439px;top:269px;width:49px;height:17px;background:#00FFFF;">ΤμΧιλ</div>
<div class="a cell r" style="left:489px;top:269px;width:64px;height:17px;background:#00FFFF;">28.400</div>
<div class="a cell r" style="left:554px;top:269px;width:84px;height:17px;background:#00FFFF;">29</div>
<div class="a cell" style="left:639px;top:269px;width:131px;height:17px;background:#fff;letter-spacing:-0.35px;">ΟΔΝ 3112</div>
<div class="a thin" style="left:209px;top:287px;width:11px;height:17px;background:#D4D0C8"></div>
<div class="a thin" style="left:221px;top:287px;width:35px;height:17px;background:#D4D0C8"></div>
<svg class="a" style="left:233px;top:289px" width="10" height="14" shape-rendering="crispEdges"><use href="#pg"/></svg>
<div class="a cell" style="left:257px;top:287px;width:77px;height:17px;background:#00FFFF;">1.9</div>
<div class="a cell" style="left:335px;top:287px;width:103px;height:17px;background:#00FFFF;letter-spacing:0.25px;">Καθαρά μεταφορά των</div>
<div class="a cell" style="left:439px;top:287px;width:49px;height:17px;background:#00FFFF;">ΤμΧιλ</div>
<div class="a cell r" style="left:489px;top:287px;width:64px;height:17px;background:#00FFFF;">21.500</div>
<div class="a cell r" style="left:554px;top:287px;width:84px;height:17px;background:#00FFFF;">11</div>
<div class="a cell" style="left:639px;top:287px;width:131px;height:17px;background:#fff;letter-spacing:-0.35px;">ΟΔΝ 3212</div>
<div class="a thin" style="left:209px;top:305px;width:11px;height:17px;background:#D4D0C8"></div>
<div class="a thin" style="left:221px;top:305px;width:35px;height:17px;background:#D4D0C8"></div>
<svg class="a" style="left:233px;top:307px" width="10" height="14" shape-rendering="crispEdges"><use href="#pg"/></svg>
<div class="a cell" style="left:257px;top:305px;width:77px;height:17px;background:#00FFFF;">1.10</div>
<div class="a cell" style="left:335px;top:305px;width:103px;height:17px;background:#00FFFF;letter-spacing:0.25px;">Ασφαλτική συγκολλητική</div>
<div class="a cell" style="left:439px;top:305px;width:49px;height:17px;background:#00FFFF;">M2</div>
<div class="a cell r" style="left:489px;top:305px;width:64px;height:17px;background:#00FFFF;">1.420</div>
<div class="a cell r" style="left:554px;top:305px;width:84px;height:17px;background:#00FFFF;">78</div>
<div class="a cell" style="left:639px;top:305px;width:131px;height:17px;background:#fff;letter-spacing:-0.35px;">ΟΔΝ 4120</div>
<div class="a thin" style="left:209px;top:323px;width:11px;height:17px;background:#D4D0C8"></div>
<div class="a thin" style="left:221px;top:323px;width:35px;height:17px;background:#D4D0C8"></div>
<svg class="a" style="left:233px;top:325px" width="10" height="14" shape-rendering="crispEdges"><use href="#pg"/></svg>
<div class="a cell" style="left:257px;top:323px;width:77px;height:17px;background:#00FFFF;">1.11</div>
<div class="a cell" style="left:335px;top:323px;width:103px;height:17px;background:#00FFFF;letter-spacing:0.25px;">Καθαρά μεταφορά των</div>
<div class="a cell" style="left:439px;top:323px;width:49px;height:17px;background:#00FFFF;">ΤμΧιλ</div>
<div class="a cell r" style="left:489px;top:323px;width:64px;height:17px;background:#00FFFF;">42.600</div>
<div class="a cell r" style="left:554px;top:323px;width:84px;height:17px;background:#00FFFF;">6</div>
<div class="a cell" style="left:639px;top:323px;width:131px;height:17px;background:#fff;letter-spacing:-0.35px;">ΟΔΝ 4522</div>
<div class="a thin" style="left:209px;top:341px;width:11px;height:17px;background:#D4D0C8"></div>
<div class="a thin" style="left:221px;top:341px;width:35px;height:17px;background:#D4D0C8"></div>
<svg class="a" style="left:233px;top:343px" width="10" height="14" shape-rendering="crispEdges"><use href="#pg"/></svg>
<div class="a cell" style="left:257px;top:341px;width:77px;height:17px;background:#00FFFF;">1.12</div>
<div class="a cell" style="left:335px;top:341px;width:103px;height:17px;background:#00FFFF;letter-spacing:0.25px;">Πλήρης κατασκευή υπόβασης</div>
<div class="a cell" style="left:439px;top:341px;width:49px;height:17px;background:#00FFFF;">M2</div>
<div class="a cell r" style="left:489px;top:341px;width:64px;height:17px;background:#00FFFF;">1.420</div>
<div class="a cell r" style="left:554px;top:341px;width:84px;height:17px;background:#00FFFF;">1.100</div>
<div class="a cell" style="left:639px;top:341px;width:131px;height:17px;background:#fff;letter-spacing:-0.35px;">ΟΔΝ 3111Β</div>
<div class="a thin" style="left:209px;top:359px;width:11px;height:17px;background:#D4D0C8"></div>
<div class="a thin" style="left:221px;top:359px;width:35px;height:17px;background:#D4D0C8"></div>
<svg class="a" style="left:233px;top:361px" width="10" height="14" shape-rendering="crispEdges"><use href="#pg"/></svg>
<div class="a cell" style="left:257px;top:359px;width:77px;height:17px;background:#00FFFF;">1.13</div>
<div class="a cell" style="left:335px;top:359px;width:103px;height:17px;background:#00FFFF;letter-spacing:0.25px;">Πλήρης κατασκευή βάσης</div>
<div class="a cell" style="left:439px;top:359px;width:49px;height:17px;background:#00FFFF;">M2</div>
<div class="a cell r" style="left:489px;top:359px;width:64px;height:17px;background:#00FFFF;">1.420</div>
<div class="a cell r" style="left:554px;top:359px;width:84px;height:17px;background:#00FFFF;">606</div>
<div class="a cell" style="left:639px;top:359px;width:131px;height:17px;background:#fff;letter-spacing:-0.35px;">ΟΔΝ 3211Β</div>
<div class="a thin" style="left:209px;top:377px;width:11px;height:17px;background:#D4D0C8"></div>
<div class="a thin" style="left:221px;top:377px;width:35px;height:17px;background:#D4D0C8"></div>
<svg class="a" style="left:233px;top:379px" width="10" height="14" shape-rendering="crispEdges"><use href="#pg"/></svg>
<div class="a cell" style="left:257px;top:377px;width:77px;height:17px;background:#00FFFF;">1.14</div>
<div class="a cell" style="left:335px;top:377px;width:103px;height:17px;background:#00FFFF;letter-spacing:0.25px;">Κατασκευή ασφαλτικής</div>
<div class="a cell" style="left:439px;top:377px;width:49px;height:17px;background:#00FFFF;">M2</div>
<div class="a cell r" style="left:489px;top:377px;width:64px;height:17px;background:#00FFFF;">1.420</div>
<div class="a cell r" style="left:554px;top:377px;width:84px;height:17px;background:#00FFFF;">792</div>
<div class="a cell" style="left:639px;top:377px;width:131px;height:17px;background:#fff;letter-spacing:-0.35px;">ΟΔΝ 4521Β</div>
<div class="a thin" style="left:209px;top:395px;width:11px;height:17px;background:#D4D0C8"></div>
<div class="a thin" style="left:221px;top:395px;width:35px;height:17px;background:#D4D0C8"></div>
<svg class="a" style="left:233px;top:397px" width="10" height="14" shape-rendering="crispEdges"><use href="#pg"/></svg>
<div class="a cell" style="left:257px;top:395px;width:77px;height:17px;background:#00FFFF;">1.15</div>
<div class="a cell" style="left:335px;top:395px;width:103px;height:17px;background:#00FFFF;letter-spacing:0.25px;">Υδροχρωματισμοί διαγραμμίσεων</div>
<div class="a cell" style="left:439px;top:395px;width:49px;height:17px;background:#00FFFF;">M2</div>
<div class="a cell r" style="left:489px;top:395px;width:64px;height:17px;background:#00FFFF;">50</div>
<div class="a cell r" style="left:554px;top:395px;width:84px;height:17px;background:#00FFFF;">2.137</div>
<div class="a cell" style="left:639px;top:395px;width:131px;height:17px;background:#fff;letter-spacing:-0.35px;">OIK 7725</div>
<div class="a thin" style="left:209px;top:413px;width:11px;height:17px;background:#D4D0C8"></div>
<div class="a thin" style="left:221px;top:413px;width:35px;height:17px;background:#D4D0C8"></div>
<svg class="a" style="left:233px;top:415px" width="10" height="14" shape-rendering="crispEdges"><use href="#pg"/></svg>
<div class="a cell" style="left:257px;top:413px;width:77px;height:17px;background:#00FFFF;">1.16</div>
<div class="a cell" style="left:335px;top:413px;width:103px;height:17px;background:#00FFFF;letter-spacing:0.25px;">Μεταλλικές εστίες μίνι</div>
<div class="a cell" style="left:439px;top:413px;width:49px;height:17px;background:#00FFFF;">Ζεύγη</div>
<div class="a cell r" style="left:489px;top:413px;width:64px;height:17px;background:#00FFFF;">1</div>
<div class="a cell r" style="left:554px;top:413px;width:84px;height:17px;background:#00FFFF;">340.056</div>
<div class="a cell" style="left:639px;top:413px;width:131px;height:17px;background:#fff;letter-spacing:-0.35px;">OIK 6418 60%, OIK 6406 40%</div>
<div class="a dither" style="left:209px;top:438px;width:561px;height:16px;"></div>
<div class="a raised" style="left:209px;top:438px;width:16px;height:16px;background:#D4D0C8"><svg class="a" style="left:5px;top:4px;" width="4" height="7" viewBox="0 0 4 7" shape-rendering="crispEdges"><path d="M4 0v7l-4-3.5z" fill="#000" shape-rendering="geometricPrecision"/></svg></div>
<div class="a raised" style="left:225px;top:438px;width:16px;height:16px;background:#D4D0C8"></div>
<div class="a raised" style="left:754px;top:438px;width:16px;height:16px;background:#D4D0C8"><svg class="a" style="left:6px;top:4px;" width="4" height="7" viewBox="0 0 4 7" shape-rendering="crispEdges"><path d="M0 0v7l4-3.5z" fill="#000" shape-rendering="geometricPrecision"/></svg></div>
<div class="a " style="left:770px;top:438px;width:16px;height:16px;background:#D4D0C8"></div>
<div class="a dither" style="left:770px;top:112px;width:16px;height:326px;"></div>
<div class="a raised" style="left:770px;top:112px;width:16px;height:16px;background:#D4D0C8"><svg class="a" style="left:4px;top:5px;" width="7" height="4" viewBox="0 0 7 4" shape-rendering="crispEdges"><path d="M0 4h7l-3.5-4z" fill="#000" shape-rendering="geometricPrecision"/></svg></div>
<div class="a raised" style="left:770px;top:267px;width:16px;height:16px;background:#D4D0C8"></div>
<div class="a raised" style="left:770px;top:422px;width:16px;height:16px;background:#D4D0C8"><svg class="a" style="left:4px;top:6px;" width="7" height="4" viewBox="0 0 7 4" shape-rendering="crispEdges"><path d="M0 0h7l-3.5 4z" fill="#000" shape-rendering="geometricPrecision"/></svg></div>
<div class="a sunken" style="left:207px;top:460px;width:581px;height:45px;background:#fff"></div>
<div class="a t" style="left:210px;top:464px;font-family:'Liberation Mono',monospace;font-size:10.8px;letter-spacing:0.52px;line-height:14px;color:#1a1a1a">Σκυρόδεμα κατηγορίας Β160 των 300 kg τσιμέντου, διά σκύρων διαστάσεων 0,7 έως 2,5
ή 3 cm</div></body></html>
